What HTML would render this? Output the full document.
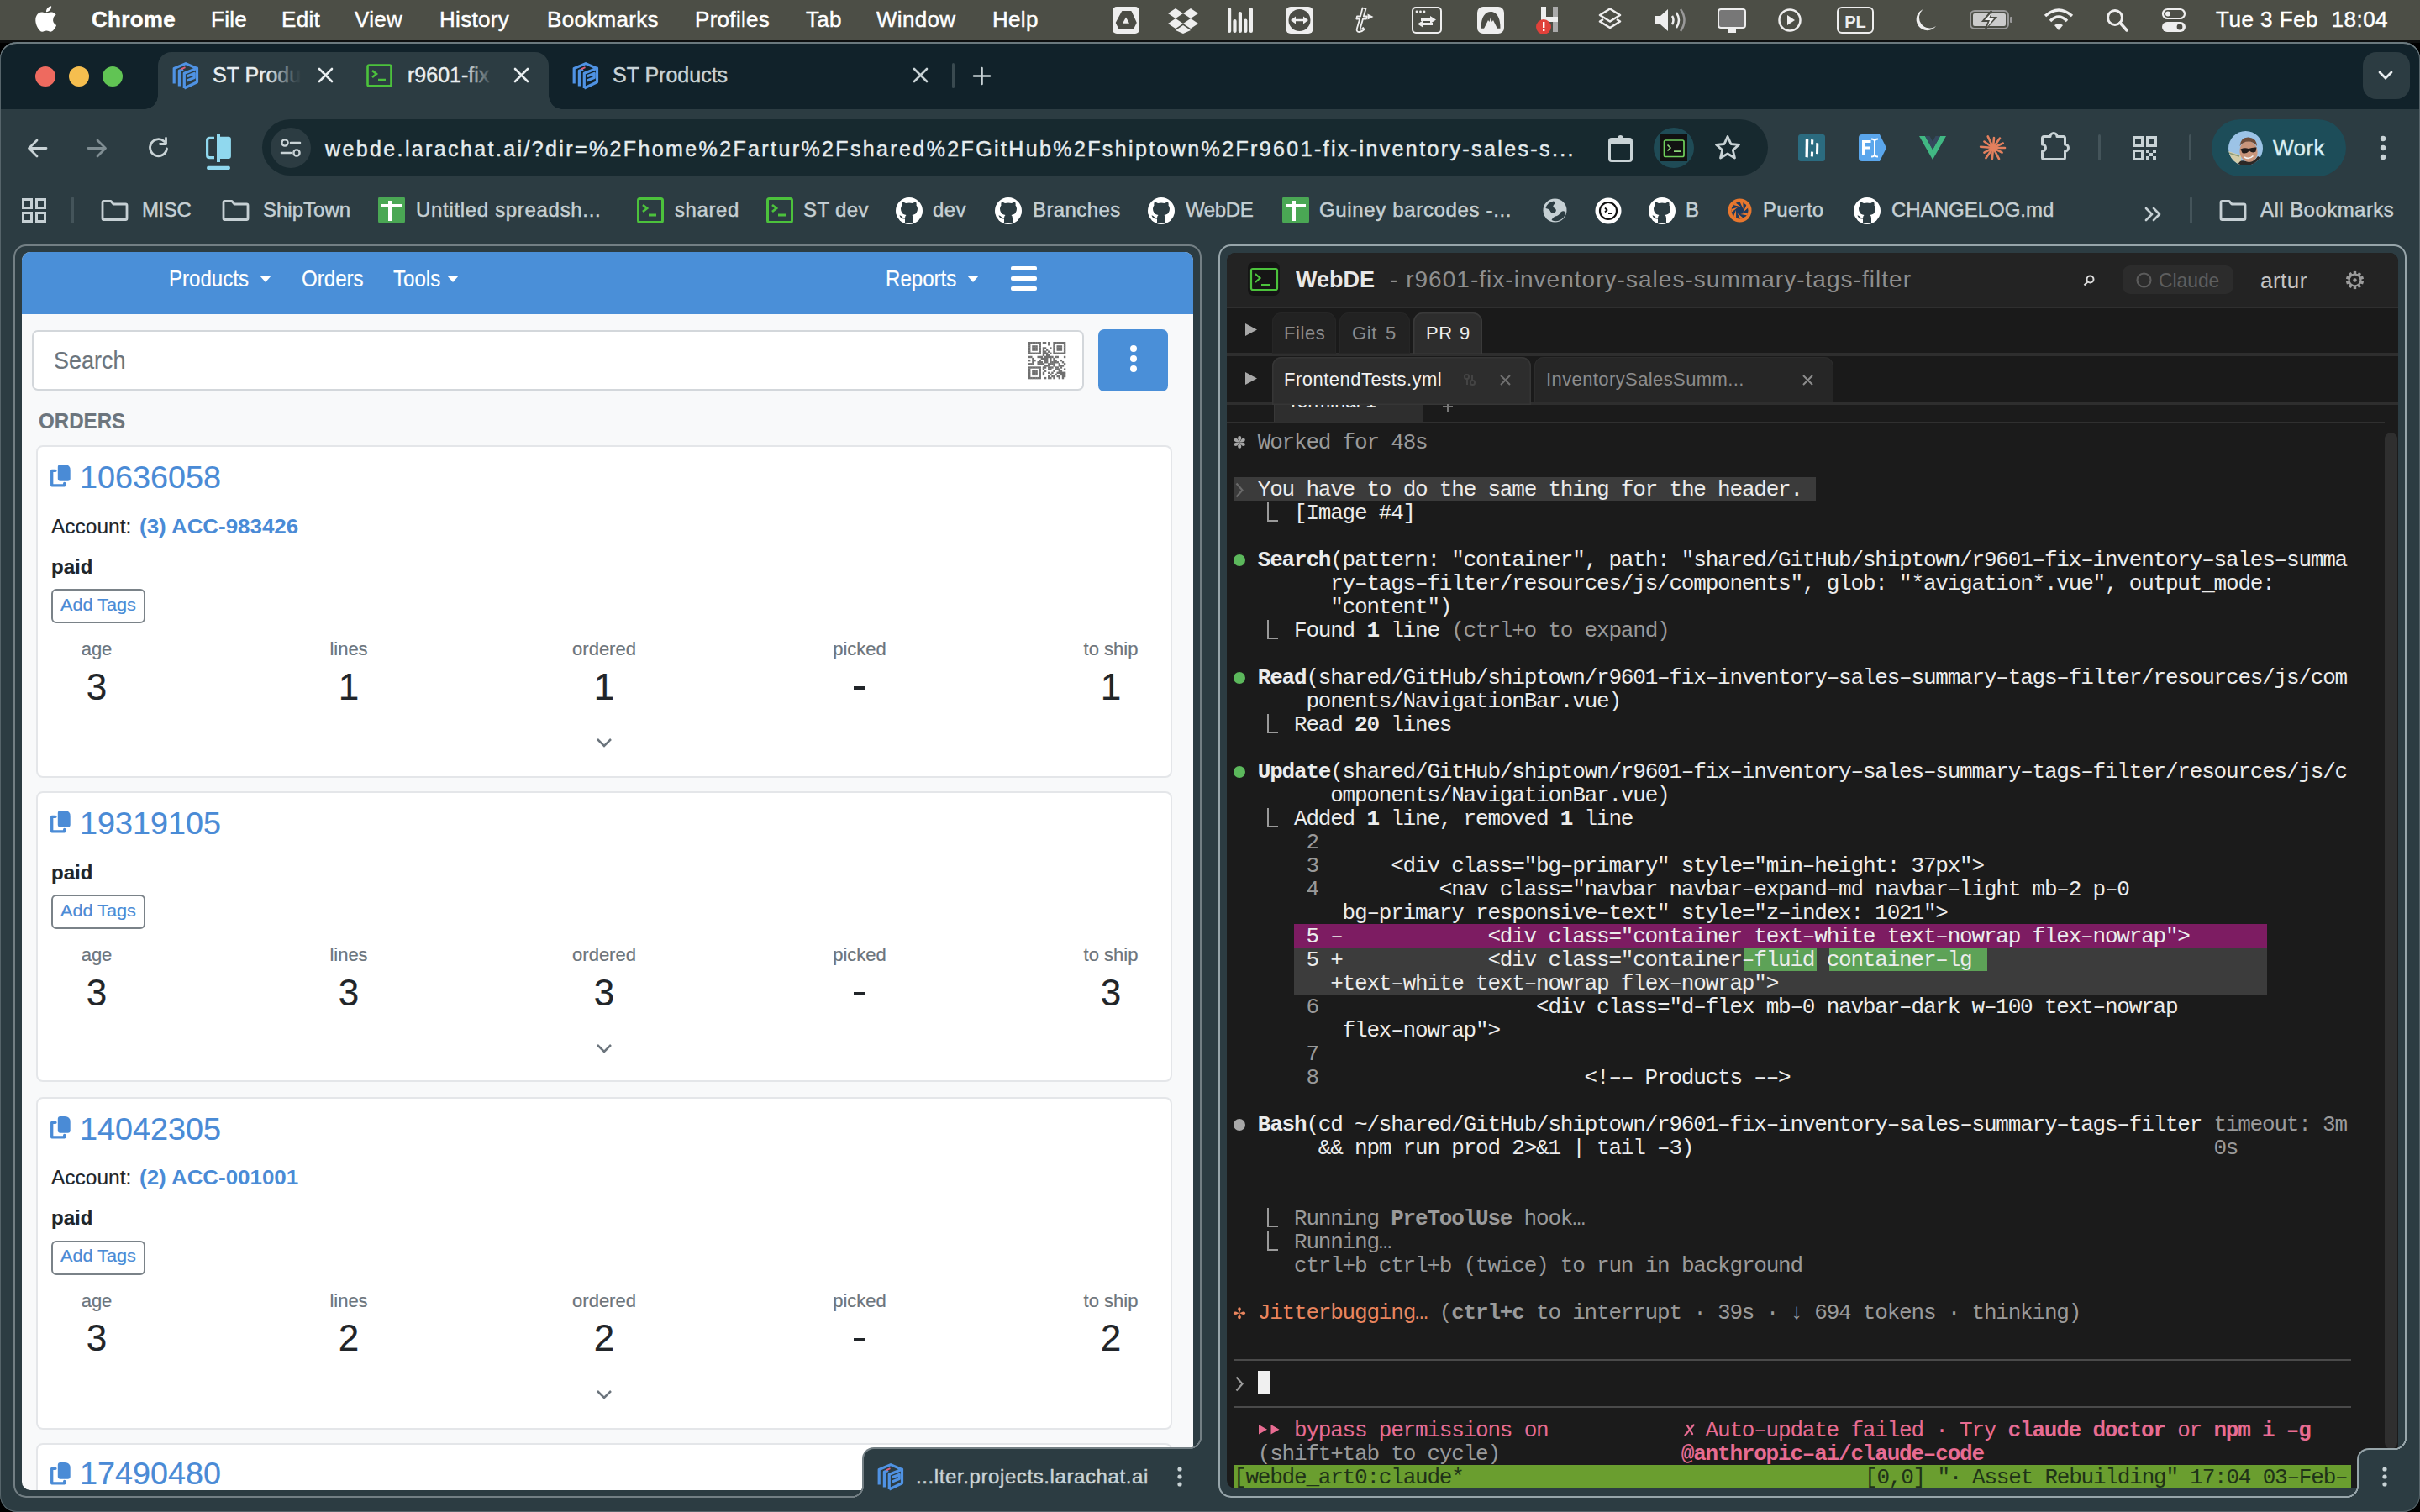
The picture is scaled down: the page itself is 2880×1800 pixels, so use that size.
<!DOCTYPE html><html><head><meta charset="utf-8"><style>
html,body{margin:0;padding:0;width:2880px;height:1800px;overflow:hidden;background:#000}
.r{position:absolute;box-sizing:border-box}
svg.r{overflow:visible}
.t{position:absolute;white-space:pre;line-height:0;}
.s{font-family:"Liberation Sans",sans-serif;-webkit-text-stroke:0.45px currentColor}
.m{font-family:"Liberation Mono",monospace}
.clipL .s{-webkit-text-stroke:0.2px currentColor}
.clipR .s{-webkit-text-stroke:0}
</style></head><body>
<div class="r" style="left:0px;top:0px;width:2880px;height:48px;background:#4c4e46;"></div>
<div class="r" style="left:0px;top:48px;width:2880px;height:3px;background:#0d0f0f;"></div>
<svg class="r" style="left:41px;top:7px;" width="27" height="31" viewBox="0 0 27 31"><path fill="#fff" d="M22.3 16.5c0-3.9 3.2-5.8 3.4-5.9-1.8-2.7-4.7-3.1-5.7-3.1-2.4-.3-4.7 1.4-6 1.4-1.2 0-3.1-1.4-5.1-1.3C6.300 7.600 3.900 9.100 2.600 11.500c-2.700 4.700-.7 11.600 1.900 15.400 1.300 1.800 2.800 3.900 4.800 3.800 1.900-.1 2.700-1.200 5-1.200s3 1.200 5 1.200c2.100 0 3.400-1.900 4.700-3.700 1.500-2.100 2.100-4.200 2.100-4.300-.1 0-4-1.600-4.100-6.200zM18.500 5.100c1.100-1.300 1.800-3.100 1.600-4.900-1.500.1-3.400 1-4.500 2.300-1 1.100-1.900 3-1.600 4.800 1.700.1 3.400-.9 4.500-2.200z"/></svg>
<div class="t s" style="left:109.0px;top:22.69px;font-size:26px;color:#ffffff;font-weight:700;letter-spacing:0.3px;">Chrome</div>
<div class="t s" style="left:251.0px;top:22.69px;font-size:26px;color:#ffffff;letter-spacing:0.3px;">File</div>
<div class="t s" style="left:335.0px;top:22.69px;font-size:26px;color:#ffffff;letter-spacing:0.3px;">Edit</div>
<div class="t s" style="left:422.0px;top:22.69px;font-size:26px;color:#ffffff;letter-spacing:0.3px;">View</div>
<div class="t s" style="left:523.0px;top:22.69px;font-size:26px;color:#ffffff;letter-spacing:0.3px;">History</div>
<div class="t s" style="left:651.0px;top:22.69px;font-size:26px;color:#ffffff;letter-spacing:0.3px;">Bookmarks</div>
<div class="t s" style="left:827.0px;top:22.69px;font-size:26px;color:#ffffff;letter-spacing:0.3px;">Profiles</div>
<div class="t s" style="left:959.0px;top:22.69px;font-size:26px;color:#ffffff;letter-spacing:0.3px;">Tab</div>
<div class="t s" style="left:1043.0px;top:22.69px;font-size:26px;color:#ffffff;letter-spacing:0.3px;">Window</div>
<div class="t s" style="left:1181.0px;top:22.69px;font-size:26px;color:#ffffff;letter-spacing:0.3px;">Help</div>
<svg class="r" style="left:1324px;top:8px;" width="32" height="32" viewBox="0 0 32 32"><rect x="0" y="0" width="32" height="32" rx="5" fill="#eee"/><path d="M11.8 5.7H22L28 19L24.5 25.8H8L4.5 19Z" fill="#4b4c45" stroke="#4b4c45" stroke-width="1.5" stroke-linejoin="round"/><path d="M12 19.7L16 12.6L20 19.7Z" fill="#eee"/></svg>
<svg class="r" style="left:1389px;top:8px;" width="38" height="32" viewBox="0 0 38 32"><g fill="#eee"><path d="M10 2l9 6-9 6-9-6z"/><path d="M28 2l9 6-9 6-9-6z"/><path d="M10 14l9 6-9 6-9-6z"/><path d="M28 14l9 6-9 6-9-6z"/><path d="M19 22l9 6-9 4-9-4z"/></g></svg>
<svg class="r" style="left:1461px;top:8px;" width="31" height="32" viewBox="0 0 31 32"><g fill="#eee"><rect x="0" y="1" width="4.2" height="30" rx="2.1"/><rect x="6.4" y="15" width="4.2" height="16" rx="2.1"/><rect x="12.8" y="6" width="4.2" height="25" rx="2.1"/><rect x="19.2" y="14.5" width="4.2" height="16.5" rx="2.1"/><rect x="25.8" y="1" width="4.2" height="30" rx="2.1"/></g></svg>
<svg class="r" style="left:1530px;top:8px;" width="33" height="32" viewBox="0 0 33 32"><rect width="33" height="32" rx="6" fill="#eee"/><circle cx="16.5" cy="16" r="13" fill="#4b4c45"/><path d="M9 16h15" stroke="#eee" stroke-width="2.5"/><path d="M6 16l6-4.5v9zM27 16l-6-4.5v9z" fill="#eee"/></svg>
<svg class="r" style="left:1608px;top:7px;" width="28" height="34" viewBox="0 0 28 34"><path d="M13.5 2.5L11 12.5H7L6.3 15.5H10.2L7 26.5Q5.8 31 9.5 31Q12.5 31 15.5 28L14.2 26Q12.5 27.8 11.5 27.8Q10.5 27.8 11 26L14 15.5H18L18.8 12.5H14.8L17.5 3.5Z" fill="none" stroke="#eee" stroke-width="1.8" stroke-linejoin="round"/><path d="M19.5 9.5L26.5 13L19.5 16.5Z" fill="#eee"/></svg>
<svg class="r" style="left:1680px;top:8px;" width="36" height="32" viewBox="0 0 36 32"><rect x="1" y="1" width="34" height="30" rx="4" fill="none" stroke="#eee" stroke-width="2"/><g fill="#eee"><circle cx="6" cy="6" r="1.4"/><circle cx="10.5" cy="6" r="1.4"/><circle cx="15" cy="6" r="1.4"/></g><path d="M11 15.5h12M25 20.5H13" stroke="#eee" stroke-width="3.2"/><path d="M22 11l7 4.5-7 4.5zM14 16l-7 4.5 7 4.5z" fill="#eee"/></svg>
<svg class="r" style="left:1758px;top:8px;" width="32" height="32" viewBox="0 0 32 32"><rect width="32" height="32" rx="7" fill="#eee"/><path d="M4.5 25.8C4.5 11 10 5.9 16 5.9C22 5.9 27.5 11 27.5 25.8Z" fill="#4b4c45"/><path d="M8 26L13 16L14.5 18L16 12.5L17.5 18L19 16L24 26Z" fill="#eee"/></svg>
<svg class="r" style="left:1827px;top:6px;" width="34" height="36" viewBox="0 0 34 36"><rect x="7" y="2" width="6" height="30" fill="#eee"/><rect x="21" y="2" width="6" height="30" fill="#aaa"/><rect x="7" y="14" width="20" height="6" fill="#eee"/><circle cx="10" cy="26" r="9" fill="#e0413a"/><rect x="9" y="20" width="2.4" height="7" fill="#fff"/><rect x="9" y="28.5" width="2.4" height="2.4" fill="#fff"/></svg>
<svg class="r" style="left:1901px;top:8px;" width="30" height="32" viewBox="0 0 30 32"><path d="M15 2.5L27 10L15 17.5L3 10Z" fill="none" stroke="#eee" stroke-width="2.6" stroke-linejoin="round"/><path d="M7 15L3 17.5L15 25L27 17.5L23 15" fill="none" stroke="#eee" stroke-width="2.6" stroke-linejoin="round"/></svg>
<svg class="r" style="left:1968px;top:8px;" width="40" height="32" viewBox="0 0 40 32"><path d="M2 11h6l9-8v26l-9-8H2z" fill="#eee"/><path d="M22 11q3 5 0 10M27 7q6 9 0 18" stroke="#eee" stroke-width="2.5" fill="none"/><path d="M32 3q9 13 0 26" stroke="#999" stroke-width="2.5" fill="none"/></svg>
<svg class="r" style="left:2044px;top:10px;" width="34" height="30" viewBox="0 0 34 30"><rect x="1" y="1" width="32" height="22" rx="3" fill="#777" stroke="#eee" stroke-width="2"/><rect x="12" y="25" width="10" height="4" fill="#eee"/></svg>
<svg class="r" style="left:2116px;top:10px;" width="28" height="28" viewBox="0 0 28 28"><circle cx="14" cy="14" r="12.5" fill="none" stroke="#eee" stroke-width="2.5"/><path d="M11 8l9 6-9 6z" fill="#eee"/></svg>
<svg class="r" style="left:2186px;top:8px;" width="44" height="32" viewBox="0 0 44 32"><rect x="1" y="1" width="42" height="30" rx="5" fill="none" stroke="#eee" stroke-width="2"/><text x="22" y="25" text-anchor="middle" font-family="Liberation Sans" font-weight="700" font-size="20" fill="#eee">PL</text></svg>
<svg class="r" style="left:2277px;top:9px;" width="28" height="30" viewBox="0 0 28 30"><path d="M12 2 A13 13 0 1 0 27 22 A11 11 0 0 1 12 2 Z" fill="#eee"/></svg>
<svg class="r" style="left:2344px;top:12px;" width="52" height="23" viewBox="0 0 52 23"><rect x="1" y="1" width="45" height="21" rx="5" fill="none" stroke="#999" stroke-width="2"/><rect x="4" y="4" width="39" height="15" rx="2" fill="#ccc"/><rect x="48" y="8" width="3" height="7" rx="1" fill="#999"/><path d="M26 1 L16 13 L23 13 L19 22 L31 9 L24 9 Z" fill="#4b4c45" stroke="#4b4c45" stroke-width="2"/><path d="M26 3 L18 12 L24 12 L21 20 L29 10 L23 10 Z" fill="#eee"/></svg>
<svg class="r" style="left:2433px;top:10px;" width="34" height="26" viewBox="0 0 34 26"><path d="M1 9 Q17 -5 33 9" stroke="#eee" stroke-width="3.5" fill="none"/><path d="M7 15 Q17 5 27 15" stroke="#eee" stroke-width="3.5" fill="none"/><path d="M12 20 L17 26 L22 20 Q17 16 12 20Z" fill="#eee"/></svg>
<svg class="r" style="left:2506px;top:10px;" width="27" height="28" viewBox="0 0 27 28"><circle cx="11" cy="11" r="8.5" fill="none" stroke="#eee" stroke-width="3"/><path d="M17 17l8 9" stroke="#eee" stroke-width="3.5" stroke-linecap="round"/></svg>
<svg class="r" style="left:2573px;top:10px;" width="28" height="28" viewBox="0 0 28 28"><rect x="1" y="1" width="26" height="11" rx="5.5" fill="none" stroke="#eee" stroke-width="2.2"/><circle cx="7" cy="6.5" r="3" fill="#eee"/><rect x="0" y="16" width="28" height="12" rx="6" fill="#eee"/><circle cx="21" cy="22" r="3.4" fill="#4b4c45"/></svg>
<div class="t s" style="left:2637.0px;top:22.99px;font-size:26px;color:#ffffff;letter-spacing:0.5px;">Tue 3 Feb  18:04</div>
<div class="r" style="left:0;top:50px;width:2880px;height:1750px;background:#2c3c42;border-radius:20px 20px 20px 20px;overflow:hidden;box-shadow: inset 0 0 0 1px #56646a"></div>
<div class="r" style="left:0px;top:50px;width:2880px;height:80px;background:#11222a;border-radius:20px 20px 0 0;box-shadow: inset 0 2px 0 #6b797e, inset 1px 0 0 #56646a, inset -1px 0 0 #56646a"></div>
<div class="r" style="left:42px;top:79px;width:24px;height:24px;background:#ee6a5f;border-radius:12px"></div>
<div class="r" style="left:82px;top:79px;width:24px;height:24px;background:#f5be4f;border-radius:12px"></div>
<div class="r" style="left:122px;top:79px;width:24px;height:24px;background:#61c454;border-radius:12px"></div>
<div class="r" style="left:188px;top:62px;width:465px;height:68px;background:#2c3c42;border-radius:16px 16px 0 0"></div>
<div class="r" style="left:172px;top:114px;width:16px;height:16px;background:radial-gradient(circle at 0 0, transparent 15.5px, #2c3c42 16px)"></div>
<div class="r" style="left:653px;top:114px;width:16px;height:16px;background:radial-gradient(circle at 100% 0, transparent 15.5px, #2c3c42 16px)"></div>
<svg class="r" style="left:205px;top:74px;" width="32" height="33" viewBox="0 0 32 33"><g fill="none" stroke="#4f92e3" stroke-width="3.2" stroke-linejoin="round"><path d="M2.2 25.5V7.5L16 1.6L29.5 7.5"/><path d="M8.4 28.5V10.3L13 8.4"/><path d="M14.3 31V13.3L29.5 7.2V23.8L14.3 31"/><path d="M17.8 16.8L26.2 13.4V18.6L17.8 22"/></g><path d="M10.5 8.3L15.5 6.2" stroke="#e0607a" stroke-width="2"/></svg>
<div class="t s" style="left:253.0px;top:89.33px;font-size:25px;color:#e9eef0;">ST Produ</div>
<div class="r" style="left:318px;top:76px;width:42px;height:30px;background:linear-gradient(90deg,rgba(44,60,66,0),rgba(44,60,66,.9) 80%,#2c3c42);"></div>
<svg class="r" style="left:379px;top:81px;" width="17" height="17" viewBox="0 0 17 17"><path d="M1 1L16 16M16 1L1 16" stroke="#e9eef0" stroke-width="2.6" stroke-linecap="round"/></svg>
<svg class="r" style="left:436px;top:76px;" width="31" height="28" viewBox="0 0 31 28"><rect x="1.5" y="1.5" width="28.0" height="24.900000000000002" rx="2.0" fill="none" stroke="#4cc23c" stroke-width="2.6"/><path d="M7.0 8.0L12.0 12.0L7.0 16.0M14.0 19.0H23.0" stroke="#4cc23c" stroke-width="2.6" fill="none"/></svg>
<div class="t s" style="left:485.0px;top:89.33px;font-size:25px;color:#e9eef0;">r9601-fix</div>
<div class="r" style="left:552px;top:76px;width:42px;height:30px;background:linear-gradient(90deg,rgba(44,60,66,0),rgba(44,60,66,.92) 80%,#2c3c42);"></div>
<svg class="r" style="left:612px;top:81px;" width="17" height="17" viewBox="0 0 17 17"><path d="M1 1L16 16M16 1L1 16" stroke="#e9eef0" stroke-width="2.6" stroke-linecap="round"/></svg>
<svg class="r" style="left:681px;top:74px;" width="32" height="33" viewBox="0 0 32 33"><g fill="none" stroke="#4f92e3" stroke-width="3.2" stroke-linejoin="round"><path d="M2.2 25.5V7.5L16 1.6L29.5 7.5"/><path d="M8.4 28.5V10.3L13 8.4"/><path d="M14.3 31V13.3L29.5 7.2V23.8L14.3 31"/><path d="M17.8 16.8L26.2 13.4V18.6L17.8 22"/></g><path d="M10.5 8.3L15.5 6.2" stroke="#e0607a" stroke-width="2"/></svg>
<div class="t s" style="left:729.0px;top:89.33px;font-size:25px;color:#c9d3d6;">ST Products</div>
<svg class="r" style="left:1087px;top:81px;" width="17" height="17" viewBox="0 0 17 17"><path d="M1 1L16 16M16 1L1 16" stroke="#c9d3d6" stroke-width="2.6" stroke-linecap="round"/></svg>
<div class="r" style="left:1133px;top:75px;width:3px;height:30px;background:#3a4a50;border-radius:2px"></div>
<svg class="r" style="left:1158px;top:80px;" width="21" height="21" viewBox="0 0 21 21"><path d="M10.5 1V20M1 10.5H20" stroke="#c9d3d6" stroke-width="2.6" stroke-linecap="round"/></svg>
<div class="r" style="left:2812px;top:62px;width:56px;height:56px;background:#2c3c42;border-radius:16px"></div>
<svg class="r" style="left:2830px;top:84px;" width="18" height="12" viewBox="0 0 18 12"><path d="M2 2L9 9L16 2" stroke="#e9eef0" stroke-width="2.8" fill="none" stroke-linecap="round"/></svg>
<svg class="r" style="left:32px;top:164px;" width="25" height="25" viewBox="0 0 25 25"><path d="M23 12.5H3M12 3L2.5 12.5L12 22" stroke="#c9d3d6" stroke-width="2.8" fill="none" stroke-linecap="round" stroke-linejoin="round"/></svg>
<svg class="r" style="left:103px;top:164px;" width="25" height="25" viewBox="0 0 25 25"><path d="M2 12.5H22M13 3L22.5 12.5L13 22" stroke="#7f8d92" stroke-width="2.8" fill="none" stroke-linecap="round" stroke-linejoin="round"/></svg>
<svg class="r" style="left:176px;top:163px;" width="26" height="26" viewBox="0 0 26 26"><path d="M22.5 14 A10 10 0 1 1 19.5 5.5" stroke="#c9d3d6" stroke-width="2.8" fill="none" stroke-linecap="round"/><path d="M21.5 1.5V8.5H14.5" stroke="#c9d3d6" stroke-width="2.8" fill="none" stroke-linecap="round" stroke-linejoin="round"/></svg>
<svg class="r" style="left:245px;top:158px;" width="31" height="45" viewBox="0 0 31 45"><path d="M10 6.3H4.6Q1.6 6.3 1.6 9.3V26.7Q1.6 29.7 4.6 29.7H10" stroke="#90d8ee" stroke-width="3.2" fill="none"/><rect x="13.4" y="4.7" width="16.5" height="26.3" rx="3" fill="#90d8ee"/><rect x="13" y="1" width="4" height="34" fill="#90d8ee"/><rect x="1" y="39.8" width="28" height="4.2" rx="2.1" fill="#90d8ee"/></svg>
<div class="r" style="left:312px;top:142px;width:1792px;height:67px;background:#17292f;border-radius:34px"></div>
<div class="r" style="left:322px;top:152px;width:48px;height:48px;background:#2c3c42;border-radius:24px"></div>
<svg class="r" style="left:333px;top:163px;" width="26" height="26" viewBox="0 0 26 26"><circle cx="6" cy="7" r="3.6" fill="none" stroke="#c9d3d6" stroke-width="2.4"/><path d="M13 7H24M2 19H13" stroke="#c9d3d6" stroke-width="2.6" stroke-linecap="round"/><circle cx="20" cy="19" r="3.6" fill="none" stroke="#c9d3d6" stroke-width="2.4"/></svg>
<div class="t s" style="left:387.0px;top:177.33px;font-size:25px;color:#e6ecee;letter-spacing:2.38px;">webde.larachat.ai/?dir=%2Fhome%2Fartur%2Fshared%2FGitHub%2Fshiptown%2Fr9601-fix-inventory-sales-s...</div>
<svg class="r" style="left:1914px;top:160px;" width="29" height="33" viewBox="0 0 29 33"><rect x="1.5" y="5.5" width="26" height="26" rx="2.5" fill="none" stroke="#c9d3d6" stroke-width="3"/><rect x="1.5" y="5.5" width="26" height="6" fill="#c9d3d6"/><circle cx="14.5" cy="4" r="3" fill="#c9d3d6"/></svg>
<div class="r" style="left:1968px;top:152px;width:48px;height:48px;background:#1f4b56;border-radius:24px"></div>
<div class="r" style="left:1976px;top:160px;width:32px;height:32px;background:#111;"></div>
<svg class="r" style="left:1979px;top:166px;" width="26" height="21" viewBox="0 0 26 21"><rect x="1.5" y="1" width="23.5" height="19.5" rx="1.8" fill="none" stroke="#6fd05c" stroke-width="1.7"/><path d="M5.5 6.5L9 10L5.5 13.5M13 14.2H21" stroke="#8fd77c" stroke-width="1.7" fill="none"/></svg>
<svg class="r" style="left:2040px;top:160px;" width="32" height="31" viewBox="0 0 32 31"><path d="M16 2.5L20 11.5L29.5 12.3L22.3 18.6L24.5 28L16 23L7.5 28L9.7 18.6L2.5 12.3L12 11.5Z" fill="none" stroke="#c9d3d6" stroke-width="2.8" stroke-linejoin="round"/></svg>
<svg class="r" style="left:2140px;top:160px;" width="32" height="32" viewBox="0 0 32 32"><rect width="32" height="32" rx="3" fill="#2b6b7f"/><g fill="#fff"><path d="M8.8 5.5L12.3 5L11.8 27.5L8.5 27Z"/><path d="M15.2 6L18.3 6.5L18.1 12.5L15 12.2Z"/><path d="M15 20.5L18.1 20.8L17.9 26.5L14.8 26.2Z"/><path d="M21.3 10L24.3 10.8L24 23.5L21 23Z"/></g></svg>
<svg class="r" style="left:2212px;top:160px;" width="33" height="32" viewBox="0 0 33 32"><path d="M0 4Q0 0 4 0H25L33 16L25 32H4Q0 32 0 28Z" fill="#5aa6ec"/><path d="M5.5 24.5V8.5H14.5M5.5 16H13" stroke="#fff" stroke-width="3" fill="none"/><path d="M15 5.5Q19 5.5 19 8.5V23.5Q19 26.5 15 26.5M23 5.5Q19 5.5 19 8.5M23 26.5Q19 26.5 19 23.5" stroke="#fff" stroke-width="2" fill="none"/></svg>
<svg class="r" style="left:2284px;top:162px;" width="32" height="28" viewBox="0 0 32 28"><path d="M0 0H7L16 16L25 0H32L16 28Z" fill="#41b883"/><path d="M7 0H12.5L16 6.5L19.5 0H25L16 16Z" fill="#35495e"/></svg>
<svg class="r" style="left:2356px;top:160px;" width="32" height="32" viewBox="0 0 32 32"><g stroke="#e3805e" stroke-width="2.6" stroke-linecap="round"><path d="M16 16 L30.0 16.0"/><path d="M16 16 L26.6 21.6"/><path d="M16 16 L23.0 29.2"/><path d="M16 16 L14.9 29.0"/><path d="M16 16 L7.4 28.3"/><path d="M16 16 L5.4 21.6"/><path d="M16 16 L1.1 14.7"/><path d="M16 16 L5.4 8.5"/><path d="M16 16 L9.7 2.4"/><path d="M16 16 L17.0 4.0"/><path d="M16 16 L24.0 4.5"/><path d="M16 16 L27.8 10.5"/></g><circle cx="16" cy="16" r="3" fill="#e3805e"/></svg>
<svg class="r" style="left:2428px;top:157px;" width="35" height="36" viewBox="0 0 35 36"><path d="M4.5 5.5H12A4 4 0 0 1 20 5.5H27.5Q29.5 5.5 29.5 7.5V15A4 4 0 0 1 29.5 23V30.5Q29.5 32.5 27.5 32.5H4.5Q2.5 32.5 2.5 30.5V23A4 4 0 0 0 2.5 15V7.5Q2.5 5.5 4.5 5.5Z" fill="none" stroke="#c9d3d6" stroke-width="3" stroke-linejoin="round"/></svg>
<div class="r" style="left:2497px;top:160px;width:3px;height:31px;background:#44545a;border-radius:2px"></div>
<svg class="r" style="left:2538px;top:162px;" width="29" height="28" viewBox="0 0 29 28"><g fill="none" stroke="#c9d3d6" stroke-width="3"><rect x="1.5" y="1.5" width="10" height="10"/><rect x="17.5" y="1.5" width="10" height="10"/><rect x="1.5" y="17.5" width="10" height="10"/></g><g fill="#c9d3d6"><rect x="16" y="16" width="4" height="4"/><rect x="24" y="16" width="4" height="4"/><rect x="20" y="20" width="4" height="4"/><rect x="16" y="24" width="4" height="4"/><rect x="24" y="24" width="4" height="4"/></g></svg>
<div class="r" style="left:2605px;top:160px;width:3px;height:31px;background:#44545a;border-radius:2px"></div>
<div class="r" style="left:2632px;top:142px;width:160px;height:68px;background:#1d4d59;border-radius:34px"></div>
<svg class="r" style="left:2652px;top:156px;" width="41" height="41" viewBox="0 0 41 41"><defs><clipPath id="av"><circle cx="20.5" cy="20.5" r="20.5"/></clipPath></defs><g clip-path="url(#av)"><rect width="41" height="41" fill="#9cc3e6"/><path d="M0 24L15 29V41H0Z" fill="#d4cda9"/><path d="M0 26L13 30" stroke="#8a9a7a" stroke-width="1.5"/><path d="M11 41Q13 33 21 36Q31 37 35 30L41 33V41Z" fill="#2b2826"/><ellipse cx="24" cy="24.5" rx="10.5" ry="12.5" fill="#c9957b" transform="rotate(-10 24 24.5)"/><path d="M13.5 18Q14.5 7 24 7.5Q33.5 8.5 34 18Q30 12.5 24 12.5Q17 12.5 13.5 18Z" fill="#6e4c39"/><path d="M14.5 21.5Q19.5 19.5 24 21Q29 19 33.5 19.5L32.5 24.5Q28.5 27 25 23.5Q21 28 16.5 26Z" fill="#221c1c"/><path d="M19 31Q24.5 34.5 29.5 29.5" stroke="#f2f2f2" stroke-width="1.6" fill="none"/></g></svg>
<div class="t s" style="left:2705.0px;top:175.99px;font-size:26px;color:#d9eff3;letter-spacing:0.4px;">Work</div>
<svg class="r" style="left:2830px;top:161px;" width="12" height="30" viewBox="0 0 12 30"><circle cx="6" cy="4" r="3.2" fill="#c9d3d6"/><circle cx="6" cy="15" r="3.2" fill="#c9d3d6"/><circle cx="6" cy="26" r="3.2" fill="#c9d3d6"/></svg>
<svg class="r" style="left:26px;top:236px;" width="29" height="29" viewBox="0 0 29 29"><g fill="none" stroke="#c6d0d4" stroke-width="3"><rect x="1.5" y="1.5" width="10" height="10"/><rect x="17.5" y="1.5" width="10" height="10"/><rect x="1.5" y="17.5" width="10" height="10"/><rect x="17.5" y="17.5" width="10" height="10"/></g></svg>
<div class="r" style="left:85px;top:234px;width:3px;height:32px;background:#44545a;border-radius:2px"></div>
<svg class="r" style="left:120px;top:238px;" width="33" height="25" viewBox="0 0 33 25"><path d="M2 3Q2 1.5 3.5 1.5H12L15 5H29.5Q31 5 31 6.5V22Q31 23.5 29.5 23.5H3.5Q2 23.5 2 22Z" fill="none" stroke="#c6d0d4" stroke-width="2.8" stroke-linejoin="round"/></svg>
<div class="t s" style="left:169.0px;top:249.68px;font-size:24px;color:#c6d0d4;letter-spacing:-0.4px;">MISC</div>
<svg class="r" style="left:264px;top:238px;" width="33" height="25" viewBox="0 0 33 25"><path d="M2 3Q2 1.5 3.5 1.5H12L15 5H29.5Q31 5 31 6.5V22Q31 23.5 29.5 23.5H3.5Q2 23.5 2 22Z" fill="none" stroke="#c6d0d4" stroke-width="2.8" stroke-linejoin="round"/></svg>
<div class="t s" style="left:313.0px;top:249.68px;font-size:24px;color:#c6d0d4;">ShipTown</div>
<svg class="r" style="left:450px;top:234px;" width="32" height="32" viewBox="0 0 32 32"><rect width="32" height="32" rx="3" fill="#4aa754"/><path d="M4 11H28M14 5V29" stroke="#fff" stroke-width="4"/></svg>
<div class="t s" style="left:495.0px;top:249.68px;font-size:24px;color:#c6d0d4;letter-spacing:0.68px;">Untitled spreadsh...</div>
<svg class="r" style="left:758px;top:235px;" width="32" height="31" viewBox="0 0 32 31"><rect x="1.5" y="1.5" width="29" height="28" rx="2" fill="none" stroke="#4cc23c" stroke-width="3"/><path d="M7 9L12 13L7 17M14 21H23" stroke="#4cc23c" stroke-width="2.8" fill="none"/></svg>
<div class="t s" style="left:803.0px;top:249.68px;font-size:24px;color:#c6d0d4;letter-spacing:0.6px;">shared</div>
<svg class="r" style="left:912px;top:235px;" width="32" height="31" viewBox="0 0 32 31"><rect x="1.5" y="1.5" width="29" height="28" rx="2" fill="none" stroke="#4cc23c" stroke-width="3"/><path d="M7 9L12 13L7 17M14 21H23" stroke="#4cc23c" stroke-width="2.8" fill="none"/></svg>
<div class="t s" style="left:956.0px;top:249.68px;font-size:24px;color:#c6d0d4;letter-spacing:0.4px;">ST dev</div>
<svg class="r" style="left:1066px;top:235px;" width="32" height="32" viewBox="0 0 32 32"><circle cx="16" cy="16" r="16" fill="#fff"/><path fill="#2c3c42" d="M11 30.5 V25.5 Q6 26 4.5 21.5 Q6 21 7.5 23 Q9 25 11 24.5 Q11 22 12.5 21 Q6 20 6 13.5 Q6 11 7.5 9.5 Q7 7.5 8 5.5 Q10 5.5 12 7 Q16 6 20 7 Q22 5.5 24 5.5 Q25 7.5 24.5 9.5 Q26 11 26 13.5 Q26 20 19.5 21 Q21 22 21 25 V30.5 Z"/></svg>
<div class="t s" style="left:1110.0px;top:249.68px;font-size:24px;color:#c6d0d4;letter-spacing:0.4px;">dev</div>
<svg class="r" style="left:1184px;top:235px;" width="32" height="32" viewBox="0 0 32 32"><circle cx="16" cy="16" r="16" fill="#fff"/><path fill="#2c3c42" d="M11 30.5 V25.5 Q6 26 4.5 21.5 Q6 21 7.5 23 Q9 25 11 24.5 Q11 22 12.5 21 Q6 20 6 13.5 Q6 11 7.5 9.5 Q7 7.5 8 5.5 Q10 5.5 12 7 Q16 6 20 7 Q22 5.5 24 5.5 Q25 7.5 24.5 9.5 Q26 11 26 13.5 Q26 20 19.5 21 Q21 22 21 25 V30.5 Z"/></svg>
<div class="t s" style="left:1229.0px;top:249.68px;font-size:24px;color:#c6d0d4;letter-spacing:0.4px;">Branches</div>
<svg class="r" style="left:1366px;top:235px;" width="32" height="32" viewBox="0 0 32 32"><circle cx="16" cy="16" r="16" fill="#fff"/><path fill="#2c3c42" d="M11 30.5 V25.5 Q6 26 4.5 21.5 Q6 21 7.5 23 Q9 25 11 24.5 Q11 22 12.5 21 Q6 20 6 13.5 Q6 11 7.5 9.5 Q7 7.5 8 5.5 Q10 5.5 12 7 Q16 6 20 7 Q22 5.5 24 5.5 Q25 7.5 24.5 9.5 Q26 11 26 13.5 Q26 20 19.5 21 Q21 22 21 25 V30.5 Z"/></svg>
<div class="t s" style="left:1411.0px;top:249.68px;font-size:24px;color:#c6d0d4;letter-spacing:-0.4px;">WebDE</div>
<svg class="r" style="left:1526px;top:234px;" width="32" height="32" viewBox="0 0 32 32"><rect width="32" height="32" rx="3" fill="#4aa754"/><path d="M4 11H28M14 5V29" stroke="#fff" stroke-width="4"/></svg>
<div class="t s" style="left:1570.0px;top:249.68px;font-size:24px;color:#c6d0d4;letter-spacing:0.65px;">Guiney barcodes -...</div>
<svg class="r" style="left:1836px;top:236px;" width="29" height="29" viewBox="0 0 29 29"><circle cx="14.5" cy="14.5" r="14" fill="#c6d0d4"/><path d="M3.5 12Q5.5 4.5 13 3.5Q16 5.5 13 8Q11 10.5 14.5 12Q17.5 14.5 14 17.5Q10 18.5 8.5 14.5Q6.5 12 3.5 12Z" fill="#2c3c42"/><path d="M10.5 26Q12.5 21.5 17 21Q20 19.5 21.5 16.5Q25 14 27.5 17Q26.5 23 20.5 26Q15.5 28.5 10.5 26Z" fill="#2c3c42"/><path d="M16 6Q19 3.5 23 5.5Q26 8 24 11Q20 11.5 18.5 9.5Q16.5 8 16 6Z" fill="#c6d0d4"/></svg>
<svg class="r" style="left:1898px;top:235px;" width="32" height="32" viewBox="0 0 32 32"><circle cx="16" cy="16" r="15.5" fill="#fff"/><circle cx="16" cy="16" r="10" fill="none" stroke="#111" stroke-width="2.2"/><path d="M12 12.5L14.5 15L12 17.5M16 19H20" stroke="#111" stroke-width="1.8" fill="none"/></svg>
<svg class="r" style="left:1962px;top:235px;" width="32" height="32" viewBox="0 0 32 32"><circle cx="16" cy="16" r="16" fill="#fff"/><path fill="#2c3c42" d="M11 30.5 V25.5 Q6 26 4.5 21.5 Q6 21 7.5 23 Q9 25 11 24.5 Q11 22 12.5 21 Q6 20 6 13.5 Q6 11 7.5 9.5 Q7 7.5 8 5.5 Q10 5.5 12 7 Q16 6 20 7 Q22 5.5 24 5.5 Q25 7.5 24.5 9.5 Q26 11 26 13.5 Q26 20 19.5 21 Q21 22 21 25 V30.5 Z"/></svg>
<div class="t s" style="left:2006.0px;top:249.68px;font-size:24px;color:#c6d0d4;">B</div>
<svg class="r" style="left:2056px;top:236px;" width="29" height="29" viewBox="0 0 29 29"><circle cx="14.5" cy="14.5" r="14" fill="#e8772e"/><circle cx="14.5" cy="14.5" r="10" fill="#1e3a5e"/><path d="M14.5 4.3L18.3 5.0L18.7 13.0ZM22.5 8.1L24.3 11.6L18.3 16.8ZM24.4 16.8L22.9 20.3L15.1 19.0ZM18.9 23.7L15.2 24.7L11.4 17.7ZM10.1 23.7L7.0 21.4L10.0 14.1ZM4.6 16.8L4.4 12.9L12.1 10.7ZM6.5 8.1L9.5 5.6L15.9 10.2Z" fill="#e8772e"/></svg>
<div class="t s" style="left:2098.0px;top:249.68px;font-size:24px;color:#c6d0d4;letter-spacing:0.3px;">Puerto</div>
<svg class="r" style="left:2206px;top:235px;" width="32" height="32" viewBox="0 0 32 32"><circle cx="16" cy="16" r="16" fill="#fff"/><path fill="#2c3c42" d="M11 30.5 V25.5 Q6 26 4.5 21.5 Q6 21 7.5 23 Q9 25 11 24.5 Q11 22 12.5 21 Q6 20 6 13.5 Q6 11 7.5 9.5 Q7 7.5 8 5.5 Q10 5.5 12 7 Q16 6 20 7 Q22 5.5 24 5.5 Q25 7.5 24.5 9.5 Q26 11 26 13.5 Q26 20 19.5 21 Q21 22 21 25 V30.5 Z"/></svg>
<div class="t s" style="left:2251.0px;top:249.68px;font-size:24px;color:#c6d0d4;">CHANGELOG.md</div>
<svg class="r" style="left:2552px;top:246px;" width="20" height="18" viewBox="0 0 20 18"><path d="M2 2L9 9L2 16M11 2L18 9L11 16" stroke="#c6d0d4" stroke-width="2.6" fill="none" stroke-linecap="round" stroke-linejoin="round"/></svg>
<div class="r" style="left:2606px;top:234px;width:3px;height:32px;background:#44545a;border-radius:2px"></div>
<svg class="r" style="left:2641px;top:238px;" width="33" height="25" viewBox="0 0 33 25"><path d="M2 3Q2 1.5 3.5 1.5H12L15 5H29.5Q31 5 31 6.5V22Q31 23.5 29.5 23.5H3.5Q2 23.5 2 22Z" fill="none" stroke="#c6d0d4" stroke-width="2.8" stroke-linejoin="round"/></svg>
<div class="t s" style="left:2690.0px;top:249.68px;font-size:24px;color:#c6d0d4;letter-spacing:0.45px;">All Bookmarks</div>
<div class="r" style="left:16px;top:291px;width:1414px;height:1492px;background:transparent;border:2px solid #737f84;border-radius:15px;box-sizing:border-box"></div>
<div class="r clipL" style="left:26px;top:300px;width:1394px;height:1474px;background:#f8f9fa;border-radius:10px;overflow:hidden">
<div class="r" style="left:0px;top:0px;width:1394px;height:74px;background:#4a8fd8;"></div>
<div class="t s" style="left:175.0px;top:32.29px;font-size:28px;color:#ffffff;transform:scaleX(0.86);transform-origin:0 0;">Products</div>
<svg class="r" style="left:283px;top:28px;" width="14" height="8" viewBox="0 0 14 8"><path d="M0 0H14L7 8Z" fill="#fff"/></svg>
<div class="t s" style="left:333.0px;top:32.29px;font-size:28px;color:#ffffff;transform:scaleX(0.86);transform-origin:0 0;">Orders</div>
<div class="t s" style="left:442.0px;top:32.29px;font-size:28px;color:#ffffff;transform:scaleX(0.86);transform-origin:0 0;">Tools</div>
<svg class="r" style="left:506px;top:28px;" width="14" height="8" viewBox="0 0 14 8"><path d="M0 0H14L7 8Z" fill="#fff"/></svg>
<div class="t s" style="left:1028.0px;top:32.29px;font-size:28px;color:#ffffff;transform:scaleX(0.86);transform-origin:0 0;">Reports</div>
<svg class="r" style="left:1125px;top:28px;" width="14" height="8" viewBox="0 0 14 8"><path d="M0 0H14L7 8Z" fill="#fff"/></svg>
<div class="r" style="left:1177px;top:17px;width:31px;height:4.5px;background:#fff;border-radius:2px"></div>
<div class="r" style="left:1177px;top:29px;width:31px;height:4.5px;background:#fff;border-radius:2px"></div>
<div class="r" style="left:1177px;top:41px;width:31px;height:4.5px;background:#fff;border-radius:2px"></div>
<div class="r" style="left:12px;top:93px;width:1252px;height:72px;background:#fff;border:2px solid #d3d7db;border-radius:7px;box-sizing:border-box"></div>
<div class="t s" style="left:38.0px;top:128.95px;font-size:29px;color:#6c757d;transform:scaleX(0.93);transform-origin:0 0;">Search</div>
<svg class="r" style="left:1198px;top:107px;" width="44" height="44" viewBox="0 0 44 44"><g fill="#707070"><rect x="0.00" y="0.00" width="2.40" height="2.40"/><rect x="2.10" y="0.00" width="2.40" height="2.40"/><rect x="4.19" y="0.00" width="2.40" height="2.40"/><rect x="6.29" y="0.00" width="2.40" height="2.40"/><rect x="8.38" y="0.00" width="2.40" height="2.40"/><rect x="10.48" y="0.00" width="2.40" height="2.40"/><rect x="12.57" y="0.00" width="2.40" height="2.40"/><rect x="16.76" y="0.00" width="2.40" height="2.40"/><rect x="18.86" y="0.00" width="2.40" height="2.40"/><rect x="23.05" y="0.00" width="2.40" height="2.40"/><rect x="29.33" y="0.00" width="2.40" height="2.40"/><rect x="31.43" y="0.00" width="2.40" height="2.40"/><rect x="33.52" y="0.00" width="2.40" height="2.40"/><rect x="35.62" y="0.00" width="2.40" height="2.40"/><rect x="37.71" y="0.00" width="2.40" height="2.40"/><rect x="39.81" y="0.00" width="2.40" height="2.40"/><rect x="41.90" y="0.00" width="2.40" height="2.40"/><rect x="0.00" y="2.10" width="2.40" height="2.40"/><rect x="12.57" y="2.10" width="2.40" height="2.40"/><rect x="23.05" y="2.10" width="2.40" height="2.40"/><rect x="29.33" y="2.10" width="2.40" height="2.40"/><rect x="41.90" y="2.10" width="2.40" height="2.40"/><rect x="0.00" y="4.19" width="2.40" height="2.40"/><rect x="4.19" y="4.19" width="2.40" height="2.40"/><rect x="6.29" y="4.19" width="2.40" height="2.40"/><rect x="8.38" y="4.19" width="2.40" height="2.40"/><rect x="12.57" y="4.19" width="2.40" height="2.40"/><rect x="29.33" y="4.19" width="2.40" height="2.40"/><rect x="33.52" y="4.19" width="2.40" height="2.40"/><rect x="35.62" y="4.19" width="2.40" height="2.40"/><rect x="37.71" y="4.19" width="2.40" height="2.40"/><rect x="41.90" y="4.19" width="2.40" height="2.40"/><rect x="0.00" y="6.29" width="2.40" height="2.40"/><rect x="4.19" y="6.29" width="2.40" height="2.40"/><rect x="6.29" y="6.29" width="2.40" height="2.40"/><rect x="8.38" y="6.29" width="2.40" height="2.40"/><rect x="12.57" y="6.29" width="2.40" height="2.40"/><rect x="16.76" y="6.29" width="2.40" height="2.40"/><rect x="18.86" y="6.29" width="2.40" height="2.40"/><rect x="25.14" y="6.29" width="2.40" height="2.40"/><rect x="29.33" y="6.29" width="2.40" height="2.40"/><rect x="33.52" y="6.29" width="2.40" height="2.40"/><rect x="35.62" y="6.29" width="2.40" height="2.40"/><rect x="37.71" y="6.29" width="2.40" height="2.40"/><rect x="41.90" y="6.29" width="2.40" height="2.40"/><rect x="0.00" y="8.38" width="2.40" height="2.40"/><rect x="4.19" y="8.38" width="2.40" height="2.40"/><rect x="6.29" y="8.38" width="2.40" height="2.40"/><rect x="8.38" y="8.38" width="2.40" height="2.40"/><rect x="12.57" y="8.38" width="2.40" height="2.40"/><rect x="16.76" y="8.38" width="2.40" height="2.40"/><rect x="20.95" y="8.38" width="2.40" height="2.40"/><rect x="29.33" y="8.38" width="2.40" height="2.40"/><rect x="33.52" y="8.38" width="2.40" height="2.40"/><rect x="35.62" y="8.38" width="2.40" height="2.40"/><rect x="37.71" y="8.38" width="2.40" height="2.40"/><rect x="41.90" y="8.38" width="2.40" height="2.40"/><rect x="0.00" y="10.48" width="2.40" height="2.40"/><rect x="12.57" y="10.48" width="2.40" height="2.40"/><rect x="16.76" y="10.48" width="2.40" height="2.40"/><rect x="18.86" y="10.48" width="2.40" height="2.40"/><rect x="23.05" y="10.48" width="2.40" height="2.40"/><rect x="29.33" y="10.48" width="2.40" height="2.40"/><rect x="41.90" y="10.48" width="2.40" height="2.40"/><rect x="0.00" y="12.57" width="2.40" height="2.40"/><rect x="2.10" y="12.57" width="2.40" height="2.40"/><rect x="4.19" y="12.57" width="2.40" height="2.40"/><rect x="6.29" y="12.57" width="2.40" height="2.40"/><rect x="8.38" y="12.57" width="2.40" height="2.40"/><rect x="10.48" y="12.57" width="2.40" height="2.40"/><rect x="12.57" y="12.57" width="2.40" height="2.40"/><rect x="16.76" y="12.57" width="2.40" height="2.40"/><rect x="18.86" y="12.57" width="2.40" height="2.40"/><rect x="20.95" y="12.57" width="2.40" height="2.40"/><rect x="25.14" y="12.57" width="2.40" height="2.40"/><rect x="29.33" y="12.57" width="2.40" height="2.40"/><rect x="31.43" y="12.57" width="2.40" height="2.40"/><rect x="33.52" y="12.57" width="2.40" height="2.40"/><rect x="35.62" y="12.57" width="2.40" height="2.40"/><rect x="37.71" y="12.57" width="2.40" height="2.40"/><rect x="39.81" y="12.57" width="2.40" height="2.40"/><rect x="41.90" y="12.57" width="2.40" height="2.40"/><rect x="16.76" y="14.67" width="2.40" height="2.40"/><rect x="20.95" y="14.67" width="2.40" height="2.40"/><rect x="23.05" y="14.67" width="2.40" height="2.40"/><rect x="0.00" y="16.76" width="2.40" height="2.40"/><rect x="2.10" y="16.76" width="2.40" height="2.40"/><rect x="10.48" y="16.76" width="2.40" height="2.40"/><rect x="12.57" y="16.76" width="2.40" height="2.40"/><rect x="14.67" y="16.76" width="2.40" height="2.40"/><rect x="18.86" y="16.76" width="2.40" height="2.40"/><rect x="20.95" y="16.76" width="2.40" height="2.40"/><rect x="23.05" y="16.76" width="2.40" height="2.40"/><rect x="25.14" y="16.76" width="2.40" height="2.40"/><rect x="27.24" y="16.76" width="2.40" height="2.40"/><rect x="31.43" y="16.76" width="2.40" height="2.40"/><rect x="33.52" y="16.76" width="2.40" height="2.40"/><rect x="41.90" y="16.76" width="2.40" height="2.40"/><rect x="4.19" y="18.86" width="2.40" height="2.40"/><rect x="14.67" y="18.86" width="2.40" height="2.40"/><rect x="16.76" y="18.86" width="2.40" height="2.40"/><rect x="18.86" y="18.86" width="2.40" height="2.40"/><rect x="20.95" y="18.86" width="2.40" height="2.40"/><rect x="25.14" y="18.86" width="2.40" height="2.40"/><rect x="29.33" y="18.86" width="2.40" height="2.40"/><rect x="0.00" y="20.95" width="2.40" height="2.40"/><rect x="4.19" y="20.95" width="2.40" height="2.40"/><rect x="6.29" y="20.95" width="2.40" height="2.40"/><rect x="12.57" y="20.95" width="2.40" height="2.40"/><rect x="18.86" y="20.95" width="2.40" height="2.40"/><rect x="20.95" y="20.95" width="2.40" height="2.40"/><rect x="25.14" y="20.95" width="2.40" height="2.40"/><rect x="29.33" y="20.95" width="2.40" height="2.40"/><rect x="31.43" y="20.95" width="2.40" height="2.40"/><rect x="37.71" y="20.95" width="2.40" height="2.40"/><rect x="4.19" y="23.05" width="2.40" height="2.40"/><rect x="10.48" y="23.05" width="2.40" height="2.40"/><rect x="12.57" y="23.05" width="2.40" height="2.40"/><rect x="14.67" y="23.05" width="2.40" height="2.40"/><rect x="18.86" y="23.05" width="2.40" height="2.40"/><rect x="20.95" y="23.05" width="2.40" height="2.40"/><rect x="25.14" y="23.05" width="2.40" height="2.40"/><rect x="27.24" y="23.05" width="2.40" height="2.40"/><rect x="29.33" y="23.05" width="2.40" height="2.40"/><rect x="31.43" y="23.05" width="2.40" height="2.40"/><rect x="33.52" y="23.05" width="2.40" height="2.40"/><rect x="39.81" y="23.05" width="2.40" height="2.40"/><rect x="0.00" y="25.14" width="2.40" height="2.40"/><rect x="2.10" y="25.14" width="2.40" height="2.40"/><rect x="4.19" y="25.14" width="2.40" height="2.40"/><rect x="10.48" y="25.14" width="2.40" height="2.40"/><rect x="12.57" y="25.14" width="2.40" height="2.40"/><rect x="14.67" y="25.14" width="2.40" height="2.40"/><rect x="16.76" y="25.14" width="2.40" height="2.40"/><rect x="23.05" y="25.14" width="2.40" height="2.40"/><rect x="25.14" y="25.14" width="2.40" height="2.40"/><rect x="27.24" y="25.14" width="2.40" height="2.40"/><rect x="29.33" y="25.14" width="2.40" height="2.40"/><rect x="35.62" y="25.14" width="2.40" height="2.40"/><rect x="41.90" y="25.14" width="2.40" height="2.40"/><rect x="18.86" y="27.24" width="2.40" height="2.40"/><rect x="20.95" y="27.24" width="2.40" height="2.40"/><rect x="23.05" y="27.24" width="2.40" height="2.40"/><rect x="29.33" y="27.24" width="2.40" height="2.40"/><rect x="35.62" y="27.24" width="2.40" height="2.40"/><rect x="37.71" y="27.24" width="2.40" height="2.40"/><rect x="39.81" y="27.24" width="2.40" height="2.40"/><rect x="0.00" y="29.33" width="2.40" height="2.40"/><rect x="2.10" y="29.33" width="2.40" height="2.40"/><rect x="4.19" y="29.33" width="2.40" height="2.40"/><rect x="6.29" y="29.33" width="2.40" height="2.40"/><rect x="8.38" y="29.33" width="2.40" height="2.40"/><rect x="10.48" y="29.33" width="2.40" height="2.40"/><rect x="12.57" y="29.33" width="2.40" height="2.40"/><rect x="16.76" y="29.33" width="2.40" height="2.40"/><rect x="18.86" y="29.33" width="2.40" height="2.40"/><rect x="23.05" y="29.33" width="2.40" height="2.40"/><rect x="25.14" y="29.33" width="2.40" height="2.40"/><rect x="27.24" y="29.33" width="2.40" height="2.40"/><rect x="31.43" y="29.33" width="2.40" height="2.40"/><rect x="33.52" y="29.33" width="2.40" height="2.40"/><rect x="37.71" y="29.33" width="2.40" height="2.40"/><rect x="0.00" y="31.43" width="2.40" height="2.40"/><rect x="12.57" y="31.43" width="2.40" height="2.40"/><rect x="16.76" y="31.43" width="2.40" height="2.40"/><rect x="23.05" y="31.43" width="2.40" height="2.40"/><rect x="25.14" y="31.43" width="2.40" height="2.40"/><rect x="31.43" y="31.43" width="2.40" height="2.40"/><rect x="33.52" y="31.43" width="2.40" height="2.40"/><rect x="35.62" y="31.43" width="2.40" height="2.40"/><rect x="41.90" y="31.43" width="2.40" height="2.40"/><rect x="0.00" y="33.52" width="2.40" height="2.40"/><rect x="4.19" y="33.52" width="2.40" height="2.40"/><rect x="6.29" y="33.52" width="2.40" height="2.40"/><rect x="8.38" y="33.52" width="2.40" height="2.40"/><rect x="12.57" y="33.52" width="2.40" height="2.40"/><rect x="18.86" y="33.52" width="2.40" height="2.40"/><rect x="29.33" y="33.52" width="2.40" height="2.40"/><rect x="35.62" y="33.52" width="2.40" height="2.40"/><rect x="37.71" y="33.52" width="2.40" height="2.40"/><rect x="0.00" y="35.62" width="2.40" height="2.40"/><rect x="4.19" y="35.62" width="2.40" height="2.40"/><rect x="6.29" y="35.62" width="2.40" height="2.40"/><rect x="8.38" y="35.62" width="2.40" height="2.40"/><rect x="12.57" y="35.62" width="2.40" height="2.40"/><rect x="16.76" y="35.62" width="2.40" height="2.40"/><rect x="23.05" y="35.62" width="2.40" height="2.40"/><rect x="27.24" y="35.62" width="2.40" height="2.40"/><rect x="33.52" y="35.62" width="2.40" height="2.40"/><rect x="35.62" y="35.62" width="2.40" height="2.40"/><rect x="37.71" y="35.62" width="2.40" height="2.40"/><rect x="39.81" y="35.62" width="2.40" height="2.40"/><rect x="41.90" y="35.62" width="2.40" height="2.40"/><rect x="0.00" y="37.71" width="2.40" height="2.40"/><rect x="4.19" y="37.71" width="2.40" height="2.40"/><rect x="6.29" y="37.71" width="2.40" height="2.40"/><rect x="8.38" y="37.71" width="2.40" height="2.40"/><rect x="12.57" y="37.71" width="2.40" height="2.40"/><rect x="16.76" y="37.71" width="2.40" height="2.40"/><rect x="25.14" y="37.71" width="2.40" height="2.40"/><rect x="31.43" y="37.71" width="2.40" height="2.40"/><rect x="37.71" y="37.71" width="2.40" height="2.40"/><rect x="39.81" y="37.71" width="2.40" height="2.40"/><rect x="41.90" y="37.71" width="2.40" height="2.40"/><rect x="0.00" y="39.81" width="2.40" height="2.40"/><rect x="12.57" y="39.81" width="2.40" height="2.40"/><rect x="23.05" y="39.81" width="2.40" height="2.40"/><rect x="27.24" y="39.81" width="2.40" height="2.40"/><rect x="29.33" y="39.81" width="2.40" height="2.40"/><rect x="33.52" y="39.81" width="2.40" height="2.40"/><rect x="35.62" y="39.81" width="2.40" height="2.40"/><rect x="39.81" y="39.81" width="2.40" height="2.40"/><rect x="41.90" y="39.81" width="2.40" height="2.40"/><rect x="0.00" y="41.90" width="2.40" height="2.40"/><rect x="2.10" y="41.90" width="2.40" height="2.40"/><rect x="4.19" y="41.90" width="2.40" height="2.40"/><rect x="6.29" y="41.90" width="2.40" height="2.40"/><rect x="8.38" y="41.90" width="2.40" height="2.40"/><rect x="10.48" y="41.90" width="2.40" height="2.40"/><rect x="12.57" y="41.90" width="2.40" height="2.40"/><rect x="18.86" y="41.90" width="2.40" height="2.40"/><rect x="23.05" y="41.90" width="2.40" height="2.40"/><rect x="25.14" y="41.90" width="2.40" height="2.40"/><rect x="29.33" y="41.90" width="2.40" height="2.40"/><rect x="35.62" y="41.90" width="2.40" height="2.40"/><rect x="39.81" y="41.90" width="2.40" height="2.40"/></g></svg>
<div class="r" style="left:1281px;top:92px;width:83px;height:74px;background:#4a8fd8;border-radius:7px"></div>
<div class="r" style="left:1319px;top:111px;width:8px;height:8px;background:#fff;border-radius:4px"></div>
<div class="r" style="left:1319px;top:123px;width:8px;height:8px;background:#fff;border-radius:4px"></div>
<div class="r" style="left:1319px;top:135px;width:8px;height:8px;background:#fff;border-radius:4px"></div>
<div class="t s" style="left:20.0px;top:201.33px;font-size:25px;color:#6c757d;font-weight:700;transform:scaleX(0.965);transform-origin:0 0;">ORDERS</div>
<div class="r" style="left:17px;top:230px;width:1352px;height:396px;background:#fff;border:2px solid #e4e6e9;border-radius:8px;box-sizing:border-box"></div>
<svg class="r" style="left:34px;top:253px;" width="26" height="28" viewBox="0 0 26 28"><path d="M11.8 0H17Q23.7 0 23.7 6.7V16.8Q23.7 19.8 20.7 19.8H11.8Q8.8 19.8 8.8 16.8V3Q8.8 0 11.8 0Z" fill="#4a8bd6"/><path d="M6 7.3H1.7V24.8H16.7V22.5" stroke="#4a8bd6" stroke-width="3.3" fill="none" stroke-linejoin="round" stroke-linecap="round"/></svg>
<div class="t s" style="left:69.0px;top:269.17px;font-size:37px;color:#4a8bd6;transform:scaleX(1.02);transform-origin:0 0;">10636058</div>
<div class="t s" style="left:35.0px;top:326.68px;font-size:24px;color:#212529;transform:scaleX(1.02);transform-origin:0 0;">Account:</div>
<div class="t s" style="left:140.0px;top:326.68px;font-size:24px;color:#4a8bd6;font-weight:700;transform:scaleX(1.08);transform-origin:0 0;-webkit-text-stroke:0;">(3) ACC-983426</div>
<div class="t s" style="left:35.0px;top:374.68px;font-size:24px;color:#212529;font-weight:700;">paid</div>
<div class="r" style="left:35px;top:401px;width:112px;height:41px;background:#fff;border:2px solid #7a8288;border-radius:6px;box-sizing:border-box"></div>
<div class="t s" style="left:46.0px;top:419.72px;font-size:21px;color:#4a8bd6;transform:scaleX(1.03);transform-origin:0 0;">Add Tags</div>
<div class="t s" style="left:-411.0px;width:1000px;text-align:center;top:473.37px;font-size:22px;color:#6c757d;">age</div>
<div class="t s" style="left:-411.0px;width:1000px;text-align:center;top:517.75px;font-size:44px;color:#212529;">3</div>
<div class="t s" style="left:-111.0px;width:1000px;text-align:center;top:473.37px;font-size:22px;color:#6c757d;">lines</div>
<div class="t s" style="left:-111.0px;width:1000px;text-align:center;top:517.75px;font-size:44px;color:#212529;">1</div>
<div class="t s" style="left:193.0px;width:1000px;text-align:center;top:473.37px;font-size:22px;color:#6c757d;">ordered</div>
<div class="t s" style="left:193.0px;width:1000px;text-align:center;top:517.75px;font-size:44px;color:#212529;">1</div>
<div class="t s" style="left:497.0px;width:1000px;text-align:center;top:473.37px;font-size:22px;color:#6c757d;">picked</div>
<div class="r" style="left:990px;top:517px;width:14px;height:3.5px;background:#212529;"></div>
<div class="t s" style="left:796.0px;width:1000px;text-align:center;top:473.37px;font-size:22px;color:#6c757d;">to ship</div>
<div class="t s" style="left:796.0px;width:1000px;text-align:center;top:517.75px;font-size:44px;color:#212529;">1</div>
<svg class="r" style="left:683px;top:578px;" width="20" height="12" viewBox="0 0 20 12"><path d="M2 2L10 10L18 2" stroke="#6c757d" stroke-width="2.5" fill="none"/></svg>
<div class="r" style="left:17px;top:642px;width:1352px;height:346px;background:#fff;border:2px solid #e4e6e9;border-radius:8px;box-sizing:border-box"></div>
<svg class="r" style="left:34px;top:665px;" width="26" height="28" viewBox="0 0 26 28"><path d="M11.8 0H17Q23.7 0 23.7 6.7V16.8Q23.7 19.8 20.7 19.8H11.8Q8.8 19.8 8.8 16.8V3Q8.8 0 11.8 0Z" fill="#4a8bd6"/><path d="M6 7.3H1.7V24.8H16.7V22.5" stroke="#4a8bd6" stroke-width="3.3" fill="none" stroke-linejoin="round" stroke-linecap="round"/></svg>
<div class="t s" style="left:69.0px;top:681.17px;font-size:37px;color:#4a8bd6;transform:scaleX(1.02);transform-origin:0 0;">19319105</div>
<div class="t s" style="left:35.0px;top:738.68px;font-size:24px;color:#212529;font-weight:700;">paid</div>
<div class="r" style="left:35px;top:765px;width:112px;height:41px;background:#fff;border:2px solid #7a8288;border-radius:6px;box-sizing:border-box"></div>
<div class="t s" style="left:46.0px;top:783.72px;font-size:21px;color:#4a8bd6;transform:scaleX(1.03);transform-origin:0 0;">Add Tags</div>
<div class="t s" style="left:-411.0px;width:1000px;text-align:center;top:837.37px;font-size:22px;color:#6c757d;">age</div>
<div class="t s" style="left:-411.0px;width:1000px;text-align:center;top:881.75px;font-size:44px;color:#212529;">3</div>
<div class="t s" style="left:-111.0px;width:1000px;text-align:center;top:837.37px;font-size:22px;color:#6c757d;">lines</div>
<div class="t s" style="left:-111.0px;width:1000px;text-align:center;top:881.75px;font-size:44px;color:#212529;">3</div>
<div class="t s" style="left:193.0px;width:1000px;text-align:center;top:837.37px;font-size:22px;color:#6c757d;">ordered</div>
<div class="t s" style="left:193.0px;width:1000px;text-align:center;top:881.75px;font-size:44px;color:#212529;">3</div>
<div class="t s" style="left:497.0px;width:1000px;text-align:center;top:837.37px;font-size:22px;color:#6c757d;">picked</div>
<div class="r" style="left:990px;top:881px;width:14px;height:3.5px;background:#212529;"></div>
<div class="t s" style="left:796.0px;width:1000px;text-align:center;top:837.37px;font-size:22px;color:#6c757d;">to ship</div>
<div class="t s" style="left:796.0px;width:1000px;text-align:center;top:881.75px;font-size:44px;color:#212529;">3</div>
<svg class="r" style="left:683px;top:942px;" width="20" height="12" viewBox="0 0 20 12"><path d="M2 2L10 10L18 2" stroke="#6c757d" stroke-width="2.5" fill="none"/></svg>
<div class="r" style="left:17px;top:1005.5px;width:1352px;height:396.0px;background:#fff;border:2px solid #e4e6e9;border-radius:8px;box-sizing:border-box"></div>
<svg class="r" style="left:34px;top:1028.5px;" width="26" height="28" viewBox="0 0 26 28"><path d="M11.8 0H17Q23.7 0 23.7 6.7V16.8Q23.7 19.8 20.7 19.8H11.8Q8.8 19.8 8.8 16.8V3Q8.8 0 11.8 0Z" fill="#4a8bd6"/><path d="M6 7.3H1.7V24.8H16.7V22.5" stroke="#4a8bd6" stroke-width="3.3" fill="none" stroke-linejoin="round" stroke-linecap="round"/></svg>
<div class="t s" style="left:69.0px;top:1044.67px;font-size:37px;color:#4a8bd6;transform:scaleX(1.02);transform-origin:0 0;">14042305</div>
<div class="t s" style="left:35.0px;top:1102.18px;font-size:24px;color:#212529;transform:scaleX(1.02);transform-origin:0 0;">Account:</div>
<div class="t s" style="left:140.0px;top:1102.18px;font-size:24px;color:#4a8bd6;font-weight:700;transform:scaleX(1.08);transform-origin:0 0;-webkit-text-stroke:0;">(2) ACC-001001</div>
<div class="t s" style="left:35.0px;top:1150.18px;font-size:24px;color:#212529;font-weight:700;">paid</div>
<div class="r" style="left:35px;top:1176.5px;width:112px;height:41px;background:#fff;border:2px solid #7a8288;border-radius:6px;box-sizing:border-box"></div>
<div class="t s" style="left:46.0px;top:1195.22px;font-size:21px;color:#4a8bd6;transform:scaleX(1.03);transform-origin:0 0;">Add Tags</div>
<div class="t s" style="left:-411.0px;width:1000px;text-align:center;top:1248.87px;font-size:22px;color:#6c757d;">age</div>
<div class="t s" style="left:-411.0px;width:1000px;text-align:center;top:1293.25px;font-size:44px;color:#212529;">3</div>
<div class="t s" style="left:-111.0px;width:1000px;text-align:center;top:1248.87px;font-size:22px;color:#6c757d;">lines</div>
<div class="t s" style="left:-111.0px;width:1000px;text-align:center;top:1293.25px;font-size:44px;color:#212529;">2</div>
<div class="t s" style="left:193.0px;width:1000px;text-align:center;top:1248.87px;font-size:22px;color:#6c757d;">ordered</div>
<div class="t s" style="left:193.0px;width:1000px;text-align:center;top:1293.25px;font-size:44px;color:#212529;">2</div>
<div class="t s" style="left:497.0px;width:1000px;text-align:center;top:1248.87px;font-size:22px;color:#6c757d;">picked</div>
<div class="r" style="left:990px;top:1292.5px;width:14px;height:3.5px;background:#212529;"></div>
<div class="t s" style="left:796.0px;width:1000px;text-align:center;top:1248.87px;font-size:22px;color:#6c757d;">to ship</div>
<div class="t s" style="left:796.0px;width:1000px;text-align:center;top:1293.25px;font-size:44px;color:#212529;">2</div>
<svg class="r" style="left:683px;top:1353.5px;" width="20" height="12" viewBox="0 0 20 12"><path d="M2 2L10 10L18 2" stroke="#6c757d" stroke-width="2.5" fill="none"/></svg>
<div class="r" style="left:17px;top:1418px;width:1352px;height:200px;background:#fff;border:2px solid #e4e6e9;border-radius:8px;box-sizing:border-box"></div>
<svg class="r" style="left:34px;top:1441px;" width="26" height="28" viewBox="0 0 26 28"><path d="M11.8 0H17Q23.7 0 23.7 6.7V16.8Q23.7 19.8 20.7 19.8H11.8Q8.8 19.8 8.8 16.8V3Q8.8 0 11.8 0Z" fill="#4a8bd6"/><path d="M6 7.3H1.7V24.8H16.7V22.5" stroke="#4a8bd6" stroke-width="3.3" fill="none" stroke-linejoin="round" stroke-linecap="round"/></svg>
<div class="t s" style="left:69.0px;top:1455.17px;font-size:37px;color:#4a8bd6;transform:scaleX(1.02);transform-origin:0 0;">17490480</div>
</div>
<div class="r" style="left:1026px;top:1723px;width:404px;height:60px;background:#2c3c42;border-top:2px solid #737f84;border-left:2px solid #737f84;border-top-left-radius:14px"></div>
<div class="r" style="left:1415px;top:1710px;width:16px;height:16px;background:radial-gradient(circle at 0 0, transparent 13px, #737f84 13.5px, #737f84 15px, #2c3c42 15.5px);"></div>
<div class="r" style="left:1013px;top:1768px;width:16px;height:16px;background:radial-gradient(circle at 0 0, transparent 13px, #737f84 13.5px, #737f84 15px, #2c3c42 15.5px);"></div>
<svg class="r" style="left:1044px;top:1742px;" width="32" height="33" viewBox="0 0 32 33"><g fill="none" stroke="#4f92e3" stroke-width="3.2" stroke-linejoin="round"><path d="M2.2 25.5V7.5L16 1.6L29.5 7.5"/><path d="M8.4 28.5V10.3L13 8.4"/><path d="M14.3 31V13.3L29.5 7.2V23.8L14.3 31"/><path d="M17.8 16.8L26.2 13.4V18.6L17.8 22"/></g><path d="M10.5 8.3L15.5 6.2" stroke="#e0607a" stroke-width="2"/></svg>
<div class="t s" style="left:1090.0px;top:1757.68px;font-size:24px;color:#c9d3d6;letter-spacing:0.6px;">...lter.projects.larachat.ai</div>
<svg class="r" style="left:1399px;top:1745px;" width="10" height="28" viewBox="0 0 10 28"><circle cx="5" cy="4" r="2.6" fill="#c9d3d6"/><circle cx="5" cy="13" r="2.6" fill="#c9d3d6"/><circle cx="5" cy="22" r="2.6" fill="#c9d3d6"/></svg>
<div class="r" style="left:1450px;top:291px;width:1414px;height:1492px;background:transparent;border:2px solid #97a5aa;border-radius:15px;box-sizing:border-box"></div>
<div class="r clipR" style="left:1460px;top:301px;width:1394px;height:1471px;background:#1b1b1b;border-radius:10px;overflow:hidden">
<div class="r" style="left:0px;top:0px;width:1394px;height:64px;background:#232323;"></div>
<div class="r" style="left:0px;top:64px;width:1394px;height:2px;background:#2f2f2f;"></div>
<div class="r" style="left:25px;top:11px;width:38px;height:40px;background:#151515;border-radius:7px"></div>
<svg class="r" style="left:28px;top:18px;" width="33" height="27" viewBox="0 0 33 27"><rect x="1" y="1" width="31" height="25" rx="2" fill="none" stroke="#4cc23c" stroke-width="2.2"/><path d="M6 7L11.5 12L6 17M13 20H24" stroke="#4cc23c" stroke-width="2.2" fill="none"/></svg>
<div class="t s" style="left:82.0px;top:32.29px;font-size:28px;color:#e8e8e8;font-weight:700;transform:scaleX(0.965);transform-origin:0 0">WebDE</div>
<div class="t s" style="left:194.0px;top:32.29px;font-size:28px;color:#8e8e8e;letter-spacing:1.03px;">- r9601-fix-inventory-sales-summary-tags-filter</div>
<svg class="r" style="left:1019px;top:26px;" width="14" height="14" viewBox="0 0 14 14"><circle cx="8.5" cy="5.5" r="4" fill="none" stroke="#ddd" stroke-width="2"/><path d="M5.5 8.5L1.5 12.5" stroke="#ddd" stroke-width="2.2"/></svg>
<div class="r" style="left:1066px;top:15px;width:132px;height:34px;background:#2c2c2c;border-radius:9px"></div>
<svg class="r" style="left:1082px;top:23px;" width="19" height="19" viewBox="0 0 19 19"><circle cx="9.5" cy="9.5" r="8" fill="none" stroke="#5c5c5c" stroke-width="2.2"/></svg>
<div class="t s" style="left:1109.0px;top:32.68px;font-size:24px;color:#5e5e5e;transform:scaleX(0.95);transform-origin:0 0">Claude</div>
<div class="t s" style="left:1230.0px;top:32.99px;font-size:26px;color:#c4c4c4;letter-spacing:0.5px;">artur</div>
<svg class="r" style="left:1330px;top:20px;" width="25" height="25" viewBox="0 0 25 25"><g transform="translate(12.5 12.5)"><g fill="#9c9c9c"><rect x="-1.7" y="-10.6" width="3.4" height="4" transform="rotate(0)"/><rect x="-1.7" y="-10.6" width="3.4" height="4" transform="rotate(36)"/><rect x="-1.7" y="-10.6" width="3.4" height="4" transform="rotate(72)"/><rect x="-1.7" y="-10.6" width="3.4" height="4" transform="rotate(108)"/><rect x="-1.7" y="-10.6" width="3.4" height="4" transform="rotate(144)"/><rect x="-1.7" y="-10.6" width="3.4" height="4" transform="rotate(180)"/><rect x="-1.7" y="-10.6" width="3.4" height="4" transform="rotate(216)"/><rect x="-1.7" y="-10.6" width="3.4" height="4" transform="rotate(252)"/><rect x="-1.7" y="-10.6" width="3.4" height="4" transform="rotate(288)"/><rect x="-1.7" y="-10.6" width="3.4" height="4" transform="rotate(324)"/></g><circle r="8" fill="#9c9c9c"/><circle r="5.8" fill="#232323"/><circle r="2.2" fill="#9c9c9c"/></g></svg>
<div class="r" style="left:0px;top:66px;width:1394px;height:54px;background:#1a1a1a;"></div>
<div class="r" style="left:0px;top:119px;width:1394px;height:4px;background:#2e2e2e;"></div>
<svg class="r" style="left:21px;top:83px;" width="16" height="17" viewBox="0 0 16 17"><path d="M1 1L15 8.5L1 16Z" fill="#a8a8a8"/></svg>
<div class="r" style="left:54px;top:71px;width:76px;height:49px;background:#222;border-radius:11px 11px 0 0;box-shadow:inset 0 0 0 1px #262626"></div>
<div class="r" style="left:134px;top:71px;width:84px;height:49px;background:#222;border-radius:11px 11px 0 0;box-shadow:inset 0 0 0 1px #262626"></div>
<div class="r" style="left:222px;top:71px;width:82px;height:50px;background:#2d2d2d;border-radius:11px 11px 0 0;box-shadow:inset 0 0 0 1.5px #3a3a3a"></div>
<div class="t s" style="left:68.0px;top:96.37px;font-size:22px;color:#8c8c8c;letter-spacing:0.6px;">Files</div>
<div class="t s" style="left:149.0px;top:96.37px;font-size:22px;color:#8c8c8c;letter-spacing:0.6px;">Git</div>
<div class="t s" style="left:189.0px;top:96.37px;font-size:22px;color:#8c8c8c;">5</div>
<div class="t s" style="left:237.0px;top:96.37px;font-size:22px;color:#f0f0f0;letter-spacing:0.6px;">PR</div>
<div class="t s" style="left:277.0px;top:96.37px;font-size:22px;color:#f0f0f0;">9</div>
<div class="r" style="left:0px;top:123px;width:1394px;height:54px;background:#1a1a1a;"></div>
<div class="r" style="left:0px;top:177px;width:1394px;height:4px;background:#2e2e2e;"></div>
<svg class="r" style="left:21px;top:141px;" width="16" height="17" viewBox="0 0 16 17"><path d="M1 1L15 8.5L1 16Z" fill="#a8a8a8"/></svg>
<div class="r" style="left:54px;top:124px;width:308px;height:57px;background:#2d2d2d;border-radius:11px 11px 0 0;box-shadow:inset 0 0 0 1.5px #363636"></div>
<div class="t s" style="left:68.0px;top:151.37px;font-size:22px;color:#f2f2f2;letter-spacing:0.5px;">FrontendTests.yml</div>
<svg class="r" style="left:282px;top:144px;" width="14" height="14" viewBox="0 0 14 14"><g fill="none" stroke="#444" stroke-width="2"><rect x="1" y="1" width="5" height="5" rx="2"/><rect x="8" y="8" width="5" height="5" rx="2"/><path d="M4 6V13M10 1V8"/></g></svg>
<svg class="r" style="left:325px;top:145px;" width="13" height="13" viewBox="0 0 13 13"><path d="M1 1L12 12M12 1L1 12" stroke="#707070" stroke-width="2"/></svg>
<div class="r" style="left:366px;top:124px;width:356px;height:54px;background:#262626;border-radius:11px 11px 0 0;box-shadow:inset 0 0 0 1px #2c2c2c"></div>
<div class="t s" style="left:380.0px;top:151.37px;font-size:22px;color:#8c8c8c;letter-spacing:0.4px;">InventorySalesSumm...</div>
<svg class="r" style="left:685px;top:145px;" width="13" height="13" viewBox="0 0 13 13"><path d="M1 1L12 12M12 1L1 12" stroke="#8c8c8c" stroke-width="2"/></svg>
<div class="r" style="left:56px;top:181px;width:178px;height:21px;background:#2e2e2e;box-shadow:inset 1px 0 0 #383838, inset -1px 0 0 #383838"></div>
<div class="r" style="left:72px;top:181px;width:200px;height:22px;overflow:hidden"><div class="t s" style="left:0;top:-16.5px;font-size:23px;color:#f0f0f0;line-height:22px">Terminal 1</div></div>
<svg class="r" style="left:257px;top:180px;" width="12" height="9" viewBox="0 0 12 9"><path d="M6 0V9M0 3H12" stroke="#777" stroke-width="2"/></svg>
<div class="r" style="left:0px;top:201px;width:1378px;height:2px;background:#303030;"></div>
<div class="r" style="left:1378px;top:214px;width:15px;height:1210px;background:#2f2f2f;border-radius:8px"></div>
<svg class="r" style="left:5px;top:215px;" width="21" height="21" viewBox="0 0 21 21"><g transform="translate(10.2 10.4)" fill="#a6a6a6"><path d="M0 0L-2.00 -4.02A2.1 2.1 0 0 1 2.00 -4.02Z"/><circle cx="0.00" cy="-5.26" r="2.05"/><path d="M0 0L2.48 -3.74A2.1 2.1 0 0 1 4.48 -0.28Z"/><circle cx="4.55" cy="-2.63" r="2.05"/><path d="M0 0L4.48 0.28A2.1 2.1 0 0 1 2.48 3.74Z"/><circle cx="4.55" cy="2.63" r="2.05"/><path d="M0 0L2.00 4.02A2.1 2.1 0 0 1 -2.00 4.02Z"/><circle cx="0.00" cy="5.26" r="2.05"/><path d="M0 0L-2.48 3.74A2.1 2.1 0 0 1 -4.48 0.28Z"/><circle cx="-4.55" cy="2.63" r="2.05"/><path d="M0 0L-4.48 -0.28A2.1 2.1 0 0 1 -2.48 -3.74Z"/><circle cx="-4.55" cy="-2.63" r="2.05"/></g></svg>
<div class="t m" style="left:36.8px;top:226.08px;font-size:26px;color:#9a9a9a;letter-spacing:-1.2px;">Worked for 48s</div>
<div class="r" style="left:8px;top:267px;width:693px;height:28px;background:#3b3b3b;"></div>
<svg class="r" style="left:9px;top:273px;" width="12" height="19" viewBox="0 0 12 19"><path d="M2.5 1.5L9.5 9.5L2.5 17.5" stroke="#6a6a6a" stroke-width="2.2" fill="none"/></svg>
<div class="t m" style="left:36.8px;top:282.08px;font-size:26px;color:#ececec;letter-spacing:-1.2px;">You have to do the same thing for the header.</div>
<div class="r" style="left:48.200000000000045px;top:297px;width:1.6px;height:23px;background:#9a9a9a;"></div>
<div class="r" style="left:48.200000000000045px;top:318px;width:13px;height:1.6px;background:#9a9a9a;"></div>
<div class="t m" style="left:80.0px;top:310.08px;font-size:26px;color:#ececec;letter-spacing:-1.2px;">[Image #4]</div>
<div class="r" style="left:8px;top:359px;width:14px;height:14px;background:#5cb85c;border-radius:7px"></div>
<div class="t m" style="left:36.8px;top:366.08px;font-size:26px;color:#ececec;font-weight:700;letter-spacing:-1.2px;">Search</div>
<div class="t m" style="left:123.2px;top:366.08px;font-size:26px;color:#ececec;letter-spacing:-1.2px;">(pattern: "container", path: "shared/GitHub/shiptown/r9601–fix–inventory–sales–summa</div>
<div class="t m" style="left:123.2px;top:394.08px;font-size:26px;color:#ececec;letter-spacing:-1.2px;">ry–tags–filter/resources/js/components", glob: "*avigation*.vue", output_mode:</div>
<div class="t m" style="left:123.2px;top:422.08px;font-size:26px;color:#ececec;letter-spacing:-1.2px;">"content")</div>
<div class="r" style="left:48.200000000000045px;top:437px;width:1.6px;height:23px;background:#9a9a9a;"></div>
<div class="r" style="left:48.200000000000045px;top:458px;width:13px;height:1.6px;background:#9a9a9a;"></div>
<div class="t m" style="left:80.0px;top:450.08px;font-size:26px;color:#ececec;letter-spacing:-1.2px;">Found </div>
<div class="t m" style="left:166.4px;top:450.08px;font-size:26px;color:#ececec;font-weight:700;letter-spacing:-1.2px;">1</div>
<div class="t m" style="left:195.2px;top:450.08px;font-size:26px;color:#ececec;letter-spacing:-1.2px;">line </div>
<div class="t m" style="left:267.2px;top:450.08px;font-size:26px;color:#9a9a9a;letter-spacing:-1.2px;">(ctrl+o to expand)</div>
<div class="r" style="left:8px;top:499px;width:14px;height:14px;background:#5cb85c;border-radius:7px"></div>
<div class="t m" style="left:36.8px;top:506.08px;font-size:26px;color:#ececec;font-weight:700;letter-spacing:-1.2px;">Read</div>
<div class="t m" style="left:94.4px;top:506.08px;font-size:26px;color:#ececec;letter-spacing:-1.2px;">(shared/GitHub/shiptown/r9601–fix–inventory–sales–summary–tags–filter/resources/js/com</div>
<div class="t m" style="left:94.4px;top:534.08px;font-size:26px;color:#ececec;letter-spacing:-1.2px;">ponents/NavigationBar.vue)</div>
<div class="r" style="left:48.200000000000045px;top:549px;width:1.6px;height:23px;background:#9a9a9a;"></div>
<div class="r" style="left:48.200000000000045px;top:570px;width:13px;height:1.6px;background:#9a9a9a;"></div>
<div class="t m" style="left:80.0px;top:562.08px;font-size:26px;color:#ececec;letter-spacing:-1.2px;">Read </div>
<div class="t m" style="left:152.0px;top:562.08px;font-size:26px;color:#ececec;font-weight:700;letter-spacing:-1.2px;">20</div>
<div class="t m" style="left:195.2px;top:562.08px;font-size:26px;color:#ececec;letter-spacing:-1.2px;">lines</div>
<div class="r" style="left:8px;top:611px;width:14px;height:14px;background:#5cb85c;border-radius:7px"></div>
<div class="t m" style="left:36.8px;top:618.08px;font-size:26px;color:#ececec;font-weight:700;letter-spacing:-1.2px;">Update</div>
<div class="t m" style="left:123.2px;top:618.08px;font-size:26px;color:#ececec;letter-spacing:-1.2px;">(shared/GitHub/shiptown/r9601–fix–inventory–sales–summary–tags–filter/resources/js/c</div>
<div class="t m" style="left:123.2px;top:646.08px;font-size:26px;color:#ececec;letter-spacing:-1.2px;">omponents/NavigationBar.vue)</div>
<div class="r" style="left:48.200000000000045px;top:661px;width:1.6px;height:23px;background:#9a9a9a;"></div>
<div class="r" style="left:48.200000000000045px;top:682px;width:13px;height:1.6px;background:#9a9a9a;"></div>
<div class="t m" style="left:80.0px;top:674.08px;font-size:26px;color:#ececec;letter-spacing:-1.2px;">Added </div>
<div class="t m" style="left:166.4px;top:674.08px;font-size:26px;color:#ececec;font-weight:700;letter-spacing:-1.2px;">1</div>
<div class="t m" style="left:195.2px;top:674.08px;font-size:26px;color:#ececec;letter-spacing:-1.2px;">line, removed </div>
<div class="t m" style="left:396.8px;top:674.08px;font-size:26px;color:#ececec;font-weight:700;letter-spacing:-1.2px;">1</div>
<div class="t m" style="left:425.6px;top:674.08px;font-size:26px;color:#ececec;letter-spacing:-1.2px;">line</div>
<div class="t m" style="left:94.4px;top:702.08px;font-size:26px;color:#9a9a9a;letter-spacing:-1.2px;">2</div>
<div class="t m" style="left:94.4px;top:730.08px;font-size:26px;color:#9a9a9a;letter-spacing:-1.2px;">3</div>
<div class="t m" style="left:195.2px;top:730.08px;font-size:26px;color:#ececec;letter-spacing:-1.2px;">&lt;div class="bg–primary" style="min–height: 37px"&gt;</div>
<div class="t m" style="left:94.4px;top:758.08px;font-size:26px;color:#9a9a9a;letter-spacing:-1.2px;">4</div>
<div class="t m" style="left:252.8px;top:758.08px;font-size:26px;color:#ececec;letter-spacing:-1.2px;">&lt;nav class="navbar navbar–expand–md navbar–light mb–2 p–0</div>
<div class="t m" style="left:137.6px;top:786.08px;font-size:26px;color:#ececec;letter-spacing:-1.2px;">bg–primary responsive–text" style="z–index: 1021"&gt;</div>
<div class="r" style="left:80px;top:799px;width:1158px;height:28px;background:#7d1c62;"></div>
<div class="t m" style="left:94.4px;top:814.08px;font-size:26px;color:#ececec;letter-spacing:-1.2px;">5 –</div>
<div class="t m" style="left:310.4px;top:814.08px;font-size:26px;color:#ececec;letter-spacing:-1.2px;">&lt;div class="container text–white text–nowrap flex–nowrap"&gt;</div>
<div class="r" style="left:80px;top:827px;width:1158px;height:56px;background:#3c3c3c;"></div>
<div class="r" style="left:616px;top:827px;width:86px;height:28px;background:#5da257;"></div>
<div class="r" style="left:717px;top:827px;width:188px;height:28px;background:#5da257;"></div>
<div class="t m" style="left:94.4px;top:842.08px;font-size:26px;color:#ececec;letter-spacing:-1.2px;">5 +</div>
<div class="t m" style="left:310.4px;top:842.08px;font-size:26px;color:#ececec;letter-spacing:-1.2px;">&lt;div class="container–fluid container–lg </div>
<div class="t m" style="left:123.2px;top:870.08px;font-size:26px;color:#ececec;letter-spacing:-1.2px;">+text–white text–nowrap flex–nowrap"&gt;</div>
<div class="t m" style="left:94.4px;top:898.08px;font-size:26px;color:#9a9a9a;letter-spacing:-1.2px;">6</div>
<div class="t m" style="left:368.0px;top:898.08px;font-size:26px;color:#ececec;letter-spacing:-1.2px;">&lt;div class="d–flex mb–0 navbar–dark w–100 text–nowrap</div>
<div class="t m" style="left:137.6px;top:926.08px;font-size:26px;color:#ececec;letter-spacing:-1.2px;">flex–nowrap"&gt;</div>
<div class="t m" style="left:94.4px;top:954.08px;font-size:26px;color:#9a9a9a;letter-spacing:-1.2px;">7</div>
<div class="t m" style="left:94.4px;top:982.08px;font-size:26px;color:#9a9a9a;letter-spacing:-1.2px;">8</div>
<div class="t m" style="left:425.6px;top:982.08px;font-size:26px;color:#ececec;letter-spacing:-1.2px;">&lt;!–– Products ––&gt;</div>
<div class="r" style="left:8px;top:1031px;width:14px;height:14px;background:#a8a8a8;border-radius:7px"></div>
<div class="t m" style="left:36.8px;top:1038.08px;font-size:26px;color:#ececec;font-weight:700;letter-spacing:-1.2px;">Bash</div>
<div class="t m" style="left:94.4px;top:1038.08px;font-size:26px;color:#ececec;letter-spacing:-1.2px;">(cd ~/shared/GitHub/shiptown/r9601–fix–inventory–sales–summary–tags–filter</div>
<div class="t m" style="left:1174.4px;top:1038.08px;font-size:26px;color:#9a9a9a;letter-spacing:-1.2px;">timeout: 3m</div>
<div class="t m" style="left:108.8px;top:1066.08px;font-size:26px;color:#ececec;letter-spacing:-1.2px;">&amp;&amp; npm run prod 2&gt;&amp;1 | tail –3)</div>
<div class="t m" style="left:1174.4px;top:1066.08px;font-size:26px;color:#9a9a9a;letter-spacing:-1.2px;">0s</div>
<div class="r" style="left:48.200000000000045px;top:1137px;width:1.6px;height:23px;background:#9a9a9a;"></div>
<div class="r" style="left:48.200000000000045px;top:1158px;width:13px;height:1.6px;background:#9a9a9a;"></div>
<div class="t m" style="left:80.0px;top:1150.08px;font-size:26px;color:#9a9a9a;letter-spacing:-1.2px;">Running </div>
<div class="t m" style="left:195.2px;top:1150.08px;font-size:26px;color:#9a9a9a;font-weight:700;letter-spacing:-1.2px;">PreToolUse</div>
<div class="t m" style="left:353.6px;top:1150.08px;font-size:26px;color:#9a9a9a;letter-spacing:-1.2px;">hook…</div>
<div class="r" style="left:48.200000000000045px;top:1165px;width:1.6px;height:23px;background:#9a9a9a;"></div>
<div class="r" style="left:48.200000000000045px;top:1186px;width:13px;height:1.6px;background:#9a9a9a;"></div>
<div class="t m" style="left:80.0px;top:1178.08px;font-size:26px;color:#9a9a9a;letter-spacing:-1.2px;">Running…</div>
<div class="t m" style="left:80.0px;top:1206.08px;font-size:26px;color:#9a9a9a;letter-spacing:-1.2px;">ctrl+b ctrl+b (twice) to run in background</div>
<svg class="r" style="left:5px;top:1252px;" width="21" height="21" viewBox="0 0 21 21"><g transform="translate(10 10.3)" fill="#e9855e"><path d="M0 0L-1.70 -4.20A1.75 1.75 0 0 1 1.70 -4.20Z"/><circle cx="0.00" cy="-5.25" r="1.75"/><path d="M0 0L4.20 -1.70A1.75 1.75 0 0 1 4.20 1.70Z"/><circle cx="5.25" cy="-0.00" r="1.75"/><path d="M0 0L1.70 4.20A1.75 1.75 0 0 1 -1.70 4.20Z"/><circle cx="0.00" cy="5.25" r="1.75"/><path d="M0 0L-4.20 1.70A1.75 1.75 0 0 1 -4.20 -1.70Z"/><circle cx="-5.25" cy="-0.00" r="1.75"/></g></svg>
<div class="t m" style="left:36.8px;top:1262.08px;font-size:26px;color:#e9855e;letter-spacing:-1.2px;">Jitterbugging…</div>
<div class="t m" style="left:252.8px;top:1262.08px;font-size:26px;color:#9a9a9a;letter-spacing:-1.2px;">(</div>
<div class="t m" style="left:267.2px;top:1262.08px;font-size:26px;color:#9a9a9a;font-weight:700;letter-spacing:-1.2px;">ctrl+c</div>
<div class="t m" style="left:368.0px;top:1262.08px;font-size:26px;color:#9a9a9a;letter-spacing:-1.2px;">to interrupt · 39s · ↓ 694 tokens · thinking)</div>
<div class="r" style="left:8px;top:1317px;width:1330px;height:2px;background:#4a4a4a;"></div>
<svg class="r" style="left:9px;top:1337px;" width="12" height="19" viewBox="0 0 12 19"><path d="M2.5 1.5L9.5 9.5L2.5 17.5" stroke="#9a9a9a" stroke-width="2.2" fill="none"/></svg>
<div class="r" style="left:37px;top:1331px;width:14px;height:28px;background:#f0f0f0;"></div>
<div class="r" style="left:8px;top:1373px;width:1330px;height:2px;background:#4a4a4a;"></div>
<svg class="r" style="left:38px;top:1395px;" width="26" height="12" viewBox="0 0 26 12"><path d="M0 0L10 5.7L0 11.4Z M14.5 0L24.5 5.7L14.5 11.4Z" fill="#e86c92"/></svg>
<div class="t m" style="left:80.0px;top:1402.08px;font-size:26px;color:#e86c92;letter-spacing:-1.2px;">bypass permissions on</div>
<svg class="r" style="left:543px;top:1393px;" width="16" height="18" viewBox="0 0 16 18"><path d="M2.5 14.5L12.5 2.5M5 3Q8 8 11 13" stroke="#e86c92" stroke-width="2.3" fill="none" stroke-linecap="round"/></svg>
<div class="t m" style="left:569.6px;top:1402.08px;font-size:26px;color:#e86c92;letter-spacing:-1.2px;">Auto–update failed · Try </div>
<div class="t m" style="left:929.6px;top:1402.08px;font-size:26px;color:#e86c92;font-weight:700;letter-spacing:-1.2px;">claude doctor</div>
<div class="t m" style="left:1131.2px;top:1402.08px;font-size:26px;color:#e86c92;letter-spacing:-1.2px;">or</div>
<div class="t m" style="left:1174.4px;top:1402.08px;font-size:26px;color:#e86c92;font-weight:700;letter-spacing:-1.2px;">npm i –g</div>
<div class="t m" style="left:36.8px;top:1430.08px;font-size:26px;color:#9a9a9a;letter-spacing:-1.2px;">(shift+tab to cycle)</div>
<div class="t m" style="left:540.8px;top:1430.08px;font-size:26px;color:#e86c92;font-weight:700;letter-spacing:-1.2px;">@anthropic–ai/claude–code</div>
<div class="r" style="left:8px;top:1443px;width:1330px;height:28px;background:#6a9e2f;"></div>
<div class="t m" style="left:8.0px;top:1458.08px;font-size:26px;color:#1f3318;letter-spacing:-1.2px;">[webde_art0:claude*</div>
<div class="t m" style="left:759.0px;top:1458.08px;font-size:26px;color:#1f3318;letter-spacing:-1.2px;">[0,0] "·</div>
<div class="t m" style="left:887.0px;top:1458.08px;font-size:26px;color:#1f3318;letter-spacing:-1.2px;">Asset Rebuilding" 17:04 03–Feb–</div>
</div>
<div class="r" style="left:2805px;top:1724px;width:59px;height:59px;background:#2c3c42;border-top:2px solid #97a5aa;border-left:2px solid #97a5aa;border-top-left-radius:14px"></div>
<div class="r" style="left:2849px;top:1711px;width:16px;height:16px;background:radial-gradient(circle at 0 0, transparent 13px, #97a5aa 13.5px, #97a5aa 15px, #2c3c42 15.5px);"></div>
<div class="r" style="left:2792px;top:1768px;width:16px;height:16px;background:radial-gradient(circle at 0 0, transparent 13px, #97a5aa 13.5px, #97a5aa 15px, #2c3c42 15.5px);"></div>
<div class="r" style="left:2864px;top:1700px;width:14px;height:86px;background:#2c3c42;"></div>
<svg class="r" style="left:2833px;top:1745px;" width="10" height="28" viewBox="0 0 10 28"><circle cx="5" cy="4" r="2.6" fill="#c9d3d6"/><circle cx="5" cy="13" r="2.6" fill="#c9d3d6"/><circle cx="5" cy="22" r="2.6" fill="#c9d3d6"/></svg>
</body></html>
